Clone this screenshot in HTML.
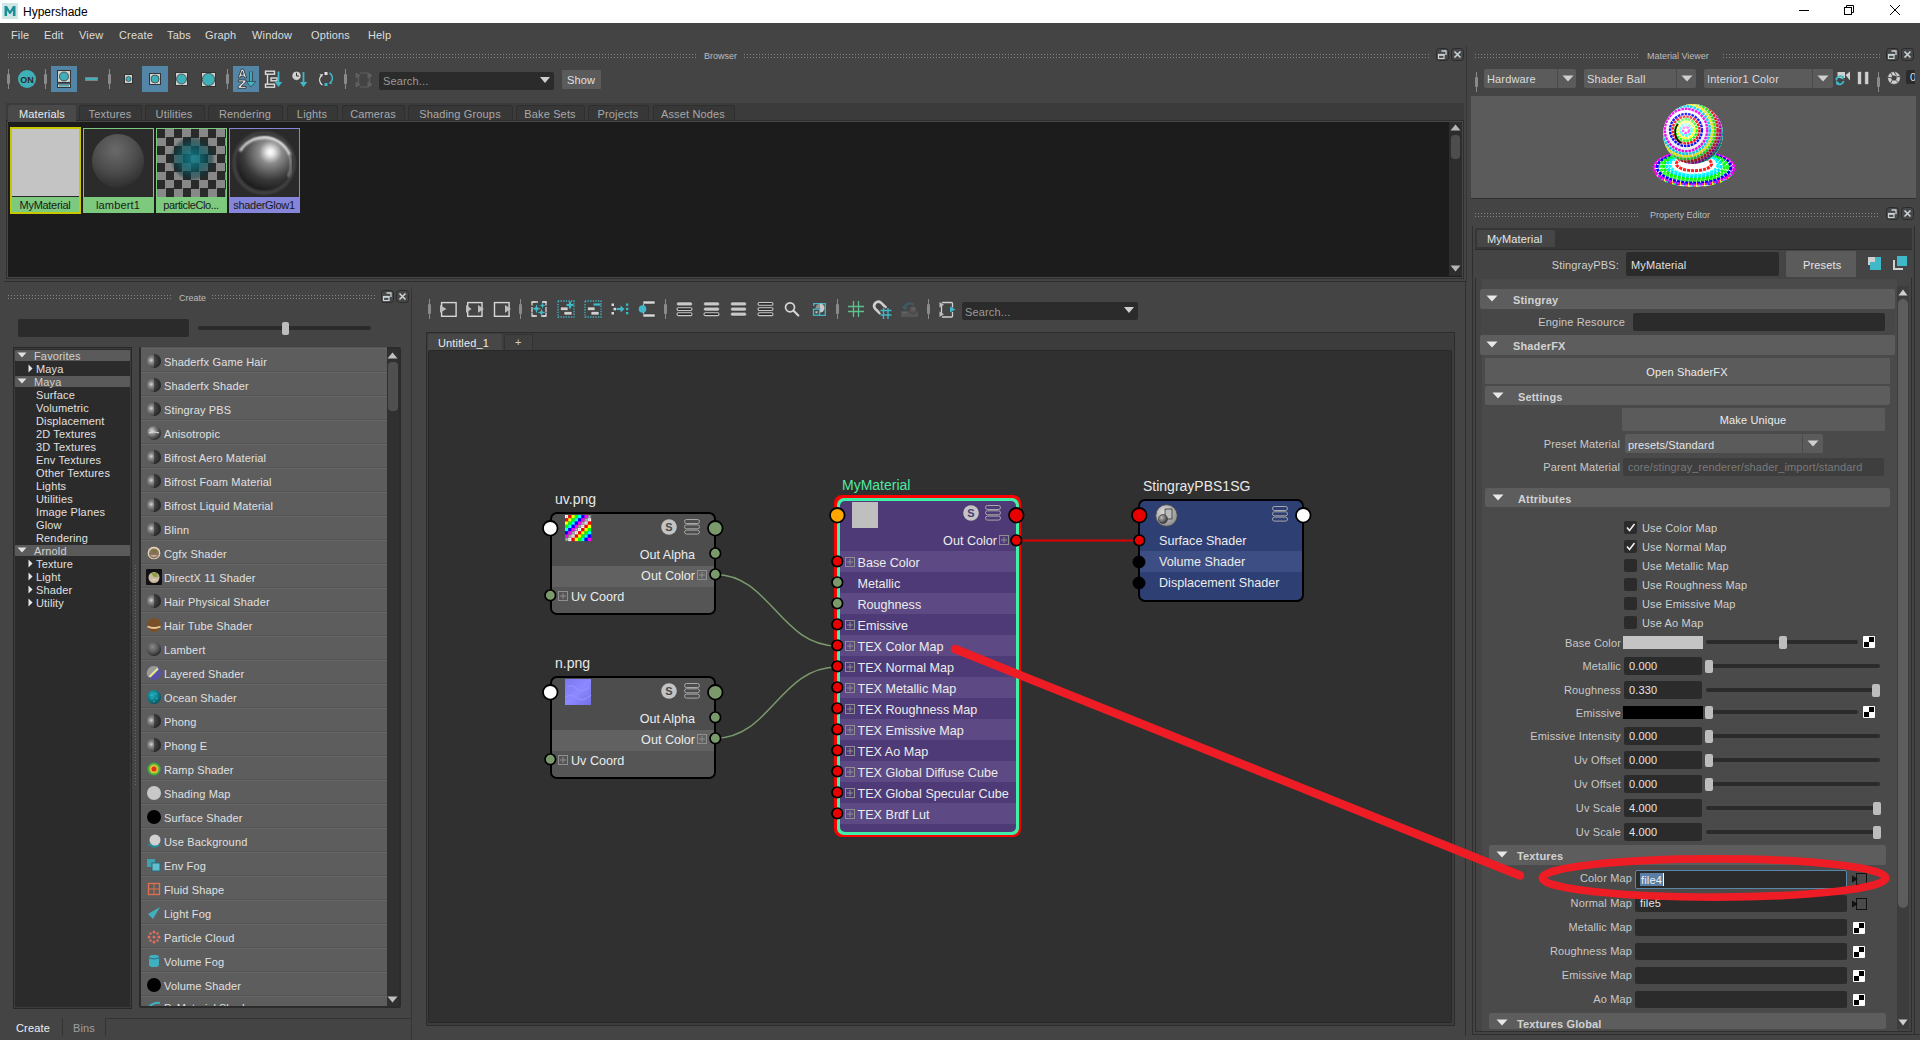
<!DOCTYPE html>
<html><head><meta charset="utf-8"><style>
*{margin:0;padding:0;box-sizing:border-box}
html,body{width:1920px;height:1040px;overflow:hidden;background:#444444;font-family:"Liberation Sans",sans-serif;font-size:11px;color:#c8c8c8;position:relative}
.a{position:absolute}
svg.a{overflow:visible}
.t{position:absolute;white-space:nowrap;line-height:1}
.dots{position:absolute;height:4px;background:repeating-linear-gradient(90deg,#858585 0 1px,transparent 1px 3px) top/100% 1px no-repeat,repeating-linear-gradient(90deg,#858585 0 1px,transparent 1px 3px) bottom/100% 1px no-repeat}
</style></head><body>
<div class="a" style="left:0px;top:0px;width:1920px;height:23px;background:#ffffff;"></div>
<svg class="a" style="left:2px;top:3px;" width="16" height="16" viewBox="0 0 16 16"><rect width="16" height="16" fill="#cfe6e6"/><path d="M2.5 13V3h2.5l3 5 3-5h2.5v10h-2.6V7.5L8.5 11h-1L5.1 7.5V13z" fill="#1a8f95"/></svg>
<div class="t" style="left:23px;top:6px;font-size:12px;color:#000;">Hypershade</div>
<div class="a" style="left:1799px;top:10px;width:10px;height:1px;background:#000;"></div>
<svg class="a" style="left:1844px;top:5px;" width="11" height="11" viewBox="0 0 11 11"><rect x="0.5" y="2.5" width="7" height="7" fill="none" stroke="#000"/><path d="M2.5 2.5V0.5h7v7H7.5" fill="none" stroke="#000"/></svg>
<svg class="a" style="left:1890px;top:5px;" width="10" height="10" viewBox="0 0 10 10"><path d="M0 0L10 10M10 0L0 10" stroke="#000" stroke-width="1"/></svg>
<div class="t" style="left:11px;top:30px;font-size:11px;color:#dddddd;;letter-spacing:0.15px">File</div>
<div class="t" style="left:44px;top:30px;font-size:11px;color:#dddddd;;letter-spacing:0.15px">Edit</div>
<div class="t" style="left:79px;top:30px;font-size:11px;color:#dddddd;;letter-spacing:0.15px">View</div>
<div class="t" style="left:119px;top:30px;font-size:11px;color:#dddddd;;letter-spacing:0.15px">Create</div>
<div class="t" style="left:167px;top:30px;font-size:11px;color:#dddddd;;letter-spacing:0.15px">Tabs</div>
<div class="t" style="left:205px;top:30px;font-size:11px;color:#dddddd;;letter-spacing:0.15px">Graph</div>
<div class="t" style="left:252px;top:30px;font-size:11px;color:#dddddd;;letter-spacing:0.15px">Window</div>
<div class="t" style="left:311px;top:30px;font-size:11px;color:#dddddd;;letter-spacing:0.15px">Options</div>
<div class="t" style="left:368px;top:30px;font-size:11px;color:#dddddd;;letter-spacing:0.15px">Help</div>
<div class="dots" style="left:8px;top:54px;width:689px"></div>
<div class="t" style="left:704px;top:52px;font-size:9px;color:#bdbdbd;">Browser</div>
<div class="dots" style="left:744px;top:54px;width:686px"></div>
<svg class="a" style="left:1436px;top:48px;" width="13" height="13" viewBox="0 0 13 13"><rect x="0.5" y="0.5" width="12" height="12" rx="3" fill="#474747" stroke="#2a2a2a"/><rect x="2.5" y="6.5" width="5.5" height="4" fill="none" stroke="#c9d3d8" stroke-width="1.2"/><rect x="2" y="6" width="6.5" height="1.8" fill="#c9d3d8"/><path d="M5.5 3h4.5v4" fill="none" stroke="#c9d3d8" stroke-width="1.3"/></svg>
<svg class="a" style="left:1451px;top:48px;" width="13" height="13" viewBox="0 0 13 13"><rect x="0.5" y="0.5" width="12" height="12" rx="3" fill="#474747" stroke="#2a2a2a"/><path d="M3.5 3.5l6 6M9.5 3.5l-6 6" stroke="#c9d3d8" stroke-width="1.6"/></svg>
<div class="a" style="left:1466px;top:46px;width:1px;height:236px;background:#363636;"></div>
<div class="a" style="left:8px;top:69px;width:1px;height:20px;background:#8a8a8a;"></div>
<div class="a" style="left:7px;top:74px;width:3px;height:10px;background:#8a8a8a;border-radius:1px"></div>
<svg class="a" style="left:18px;top:70px;" width="18" height="18" viewBox="0 0 18 18"><circle cx="9" cy="9" r="9" fill="#3fb0b8"/><text x="9" y="12.5" font-size="9" text-anchor="middle" fill="#2a2a2a" font-family="Liberation Sans" font-weight="bold">ON</text></svg>
<div class="a" style="left:45px;top:69px;width:1px;height:20px;background:#8a8a8a;"></div>
<div class="a" style="left:44px;top:74px;width:3px;height:10px;background:#8a8a8a;border-radius:1px"></div>
<div class="a" style="left:51px;top:66px;width:26px;height:26px;background:#5285a6;"></div>
<svg class="a" style="left:57px;top:70px;" width="14" height="18" viewBox="0 0 14 18"><rect x="0.5" y="0.5" width="13" height="12" fill="#d0d0d0" stroke="#333"/><circle cx="7" cy="6.5" r="4.5" fill="#3fb0b8" stroke="#333" stroke-width="0.8"/><rect x="0.5" y="14" width="13" height="3.5" fill="#d0d0d0" stroke="#333"/><rect x="2" y="15" width="10" height="1.5" fill="#3fb0b8"/></svg>
<svg class="a" style="left:85px;top:77px;" width="13" height="4" viewBox="0 0 13 4"><rect x="0.5" y="0.5" width="12" height="3" fill="#3fb0b8" stroke="#888" stroke-width="0.8"/></svg>
<div class="a" style="left:109px;top:69px;width:1px;height:20px;background:#8a8a8a;"></div>
<div class="a" style="left:108px;top:74px;width:3px;height:10px;background:#8a8a8a;border-radius:1px"></div>
<svg class="a" style="left:124px;top:74px;" width="9" height="10" viewBox="0 0 9 10"><rect x="0.5" y="0.5" width="8" height="9" fill="#d0d0d0" stroke="#333"/><circle cx="4.5" cy="5" r="2.5" fill="#3fb0b8" stroke="#333" stroke-width="0.6"/></svg>
<div class="a" style="left:142px;top:66px;width:26px;height:26px;background:#5285a6;"></div>
<svg class="a" style="left:149px;top:73px;" width="12" height="12" viewBox="0 0 12 12"><rect x="0.5" y="0.5" width="11" height="11" fill="#d0d0d0" stroke="#333"/><circle cx="6" cy="6" r="4" fill="#3fb0b8" stroke="#333" stroke-width="0.7"/></svg>
<svg class="a" style="left:175px;top:72px;" width="13" height="14" viewBox="0 0 13 14"><rect x="0.5" y="0.5" width="12" height="13" fill="#d0d0d0" stroke="#333"/><circle cx="6.5" cy="7" r="5" fill="#3fb0b8" stroke="#333" stroke-width="0.7"/></svg>
<svg class="a" style="left:201px;top:72px;" width="15" height="15" viewBox="0 0 15 15"><rect x="0.5" y="0.5" width="14" height="14" fill="#d0d0d0" stroke="#333"/><circle cx="7.5" cy="7.5" r="6.2" fill="#3fb0b8" stroke="#333" stroke-width="0.7"/></svg>
<div class="a" style="left:227px;top:69px;width:1px;height:20px;background:#8a8a8a;"></div>
<div class="a" style="left:226px;top:74px;width:3px;height:10px;background:#8a8a8a;border-radius:1px"></div>
<div class="a" style="left:233px;top:66px;width:26px;height:26px;background:#5285a6;"></div>
<svg class="a" style="left:236px;top:68px;" width="22" height="22" viewBox="0 0 22 22"><g stroke="#2a2a2a" stroke-width="0.8" fill="#e8e8e8"><path d="M2.3 9.8L5.3 1.2h2.2l3 8.6H8.4L7.8 8H4.9L4.3 9.8zM5.4 6.3h1.9l-0.95-3z"/><path d="M2.3 12h7.6v1.8L5 18.5h5v1.8H2.2v-1.8l4.9-4.7H2.3z"/></g><path d="M15 3.5v12.5" stroke="#2a2a2a" stroke-width="3.2"/><path d="M15 3.5v12.5" stroke="#3fb8c8" stroke-width="1.8"/><path d="M10.5 13.5l4.5 5.5 4.5-5.5z" fill="#3fb8c8" stroke="#2a2a2a" stroke-width="0.6"/></svg>
<svg class="a" style="left:263px;top:69px;" width="20" height="20" viewBox="0 0 20 20"><g fill="none" stroke="#dcdcdc" stroke-width="1.4"><rect x="2.5" y="2.2" width="9" height="3"/><rect x="2.5" y="15.2" width="9" height="3"/><path d="M4.5 5.5v9.5"/><rect x="8" y="9" width="6" height="2.8"/></g><path d="M15.5 2.5v13" stroke="#3fb8c8" stroke-width="1.8"/><path d="M11.8 13l3.7 5 3.7-5z" fill="#3fb8c8"/></svg>
<svg class="a" style="left:290px;top:69px;" width="20" height="20" viewBox="0 0 20 20"><circle cx="6.5" cy="6.8" r="4.6" fill="#d0d0d0" stroke="#2a2a2a" stroke-width="0.6"/><path d="M6.5 3.8v3.2h2.5" stroke="#333" stroke-width="1" fill="none"/><path d="M13.5 3v12.5" stroke="#3fb8c8" stroke-width="1.8"/><path d="M9.8 13l3.7 5 3.7-5z" fill="#3fb8c8"/></svg>
<svg class="a" style="left:317px;top:70px;" width="18" height="18" viewBox="0 0 18 18"><rect x="7.5" y="2" width="3" height="3" fill="#e0e0e0"/><rect x="7.5" y="13" width="3" height="3" fill="#3fb8c8"/><path d="M5.5 15a6 6 0 0 1-1.5-9" stroke="#e0e0e0" stroke-width="1.2" fill="none"/><path d="M2.5 4.5l3.5-0.5-1 3z" fill="#e0e0e0"/><path d="M12.5 3a6 6 0 0 1 1.5 9" stroke="#3fb8c8" stroke-width="1.5" fill="none"/><path d="M15.5 13.5l-3.5 0.5 1-3z" fill="#3fb8c8"/></svg>
<div class="a" style="left:345px;top:69px;width:1px;height:20px;background:#8a8a8a;"></div>
<div class="a" style="left:344px;top:74px;width:3px;height:10px;background:#8a8a8a;border-radius:1px"></div>
<svg class="a" style="left:356px;top:72px;" width="16" height="16" viewBox="0 0 16 16"><g fill="#5f5f5f" stroke="#5f5f5f"><path d="M0 1l4 2.5L0 6z"/><path d="M12 1l4 2.5L12 6z"/><path d="M0 10l4 2.5L0 15z"/><path d="M12 10l4 2.5L12 15z"/><path d="M4 1h8M4 15h8M2.5 5v6M13.5 5v6" fill="none" stroke-width="1.2"/></g></svg>
<div class="a" style="left:379px;top:72px;width:175px;height:18px;background:#2b2b2b;border-radius:2px"></div>
<div class="t" style="left:383px;top:76px;font-size:11px;color:#9a9a9a;;letter-spacing:0.15px">Search...</div>
<svg class="a" style="left:540px;top:77px;" width="10" height="6" viewBox="0 0 10 6"><path d="M0 0h10L5 6z" fill="#cfcfcf"/></svg>
<div class="a" style="left:562px;top:70px;width:39px;height:19px;background:#5b5b5b;border-radius:1px"></div>
<div class="t" style="left:567px;top:75px;font-size:11px;color:#e0e0e0;;letter-spacing:0.15px">Show</div>
<div class="a" style="left:6px;top:103px;width:1458px;height:18px;background:#3b3b3b;"></div>
<div class="a" style="left:9px;top:105px;width:67px;height:16px;background:#494949;border-radius:3px 3px 0 0"></div>
<div class="t" style="left:-258px;width:600px;text-align:center;top:109px;font-size:11px;color:#ececec;;letter-spacing:0.15px">Materials</div>
<div class="a" style="left:79px;top:105px;width:63px;height:16px;background:#373737;border-radius:3px 3px 0 0;border:1px solid #2f2f2f;border-bottom:none"></div>
<div class="t" style="left:-190px;width:600px;text-align:center;top:109px;font-size:11px;color:#a8a8a8;;letter-spacing:0.15px">Textures</div>
<div class="a" style="left:145px;top:105px;width:60px;height:16px;background:#373737;border-radius:3px 3px 0 0;border:1px solid #2f2f2f;border-bottom:none"></div>
<div class="t" style="left:-126px;width:600px;text-align:center;top:109px;font-size:11px;color:#a8a8a8;;letter-spacing:0.15px">Utilities</div>
<div class="a" style="left:208px;top:105px;width:75px;height:16px;background:#373737;border-radius:3px 3px 0 0;border:1px solid #2f2f2f;border-bottom:none"></div>
<div class="t" style="left:-55px;width:600px;text-align:center;top:109px;font-size:11px;color:#a8a8a8;;letter-spacing:0.15px">Rendering</div>
<div class="a" style="left:287px;top:105px;width:51px;height:16px;background:#373737;border-radius:3px 3px 0 0;border:1px solid #2f2f2f;border-bottom:none"></div>
<div class="t" style="left:12px;width:600px;text-align:center;top:109px;font-size:11px;color:#a8a8a8;;letter-spacing:0.15px">Lights</div>
<div class="a" style="left:342px;top:105px;width:63px;height:16px;background:#373737;border-radius:3px 3px 0 0;border:1px solid #2f2f2f;border-bottom:none"></div>
<div class="t" style="left:73px;width:600px;text-align:center;top:109px;font-size:11px;color:#a8a8a8;;letter-spacing:0.15px">Cameras</div>
<div class="a" style="left:408px;top:105px;width:105px;height:16px;background:#373737;border-radius:3px 3px 0 0;border:1px solid #2f2f2f;border-bottom:none"></div>
<div class="t" style="left:160px;width:600px;text-align:center;top:109px;font-size:11px;color:#a8a8a8;;letter-spacing:0.15px">Shading Groups</div>
<div class="a" style="left:516px;top:105px;width:69px;height:16px;background:#373737;border-radius:3px 3px 0 0;border:1px solid #2f2f2f;border-bottom:none"></div>
<div class="t" style="left:250px;width:600px;text-align:center;top:109px;font-size:11px;color:#a8a8a8;;letter-spacing:0.15px">Bake Sets</div>
<div class="a" style="left:588px;top:105px;width:61px;height:16px;background:#373737;border-radius:3px 3px 0 0;border:1px solid #2f2f2f;border-bottom:none"></div>
<div class="t" style="left:318px;width:600px;text-align:center;top:109px;font-size:11px;color:#a8a8a8;;letter-spacing:0.15px">Projects</div>
<div class="a" style="left:653px;top:105px;width:82px;height:16px;background:#373737;border-radius:3px 3px 0 0;border:1px solid #2f2f2f;border-bottom:none"></div>
<div class="t" style="left:393px;width:600px;text-align:center;top:109px;font-size:11px;color:#a8a8a8;;letter-spacing:0.15px">Asset Nodes</div>
<div class="a" style="left:6px;top:120px;width:1458px;height:159px;background:#2e2e2e;"></div>
<div class="a" style="left:7px;top:121px;width:1456px;height:157px;background:#474747;"></div>
<div class="a" style="left:8px;top:122px;width:1454px;height:155px;background:#1c1c1c;"></div>
<div class="a" style="left:8px;top:105px;width:68px;height:17px;background:#494949;border-radius:3px 3px 0 0"></div>
<div class="t" style="left:-258px;width:600px;text-align:center;top:109px;font-size:11px;color:#ececec;;letter-spacing:0.15px">Materials</div>
<div class="a" style="left:1449px;top:122px;width:13px;height:154px;background:#2d2d2d;"></div>
<svg class="a" style="left:1450px;top:124px;" width="11" height="8" viewBox="0 0 11 8"><path d="M0.5 6.5L5.5 0.5 10.5 6.5z" fill="#b5b5b5"/></svg>
<div class="a" style="left:1451px;top:135px;width:9px;height:24px;background:#4d4d4d;border-radius:4px"></div>
<svg class="a" style="left:1450px;top:265px;" width="11" height="8" viewBox="0 0 11 8"><path d="M0.5 0.5L5.5 6.5 10.5 0.5z" fill="#b5b5b5"/></svg>
<div class="a" style="left:4px;top:281px;width:1461px;height:1px;background:#2e2e2e;"></div>
<div class="a" style="left:10px;top:127px;width:71px;height:87px;background:#c8c800;"></div>
<div class="a" style="left:12px;top:129px;width:67px;height:68px;background:#c4c4c4;"></div>
<div class="a" style="left:12px;top:197px;width:67px;height:15px;background:#7dc97d;"></div>
<div class="a" style="left:12px;top:196px;width:67px;height:1px;background:#2a2a2a;"></div>
<div class="t" style="left:-255px;width:600px;text-align:center;top:200px;font-size:11px;color:#1a1a1a;letter-spacing:-0.3px">MyMaterial</div>
<div class="a" style="left:83px;top:128px;width:71px;height:85px;background:#7dc97d;"></div>
<div class="a" style="left:84px;top:129px;width:69px;height:68px;background:#2b2b2b;"></div>
<div class="a" style="left:92px;top:134px;width:52px;height:54px;border-radius:50%;background:radial-gradient(circle at 45% 30%,#6a6a6a 0%,#4d4d4d 45%,#2e2e2e 80%,#1e1e1e 100%)"></div>
<div class="t" style="left:-182px;width:600px;text-align:center;top:200px;font-size:11px;color:#1a1a1a;;letter-spacing:0.15px">lambert1</div>
<div class="a" style="left:156px;top:128px;width:71px;height:85px;background:#7dc97d;"></div>
<div class="a" style="left:157px;top:129px;width:69px;height:68px;background:conic-gradient(#888888 0 25%,#2a2a2a 0 50%,#888888 0 75%,#2a2a2a 0) 0 0/17px 17px"></div>
<div class="a" style="left:170px;top:136px;width:45px;height:45px;border-radius:50%;background:radial-gradient(circle,rgba(15,130,145,0.85) 0%,rgba(10,95,105,0.75) 35%,rgba(5,50,55,0.45) 60%,rgba(0,0,0,0) 72%)"></div>
<div class="t" style="left:-109px;width:600px;text-align:center;top:200px;font-size:11px;color:#1a1a1a;letter-spacing:-0.4px">particleClo...</div>
<div class="a" style="left:229px;top:128px;width:71px;height:85px;background:#8585d9;"></div>
<div class="a" style="left:230px;top:129px;width:69px;height:68px;background:#2a2a2a;"></div>
<svg class="a" style="left:230px;top:129px;" width="69" height="68" viewBox="0 0 69 68"><defs><radialGradient id="sgl" cx="0.62" cy="0.3" r="0.85"><stop offset="0" stop-color="#ffffff"/><stop offset="0.08" stop-color="#e8e8e8"/><stop offset="0.25" stop-color="#8a8a8a"/><stop offset="0.6" stop-color="#3a3a3a"/><stop offset="1" stop-color="#0a0a0a"/></radialGradient><filter id="bl"><feGaussianBlur stdDeviation="1"/></filter></defs><circle cx="34" cy="34" r="27" fill="url(#sgl)"/><path d="M10 22A28 28 0 0 1 60 26" stroke="#ffffff" stroke-width="2.5" fill="none" filter="url(#bl)" opacity="0.9"/><path d="M60 26A28 28 0 0 1 58 48" stroke="#ffffff" stroke-width="1.5" fill="none" filter="url(#bl)" opacity="0.6"/><circle cx="34" cy="34" r="30" fill="none" stroke="#ffffff" stroke-width="3" opacity="0.12" filter="url(#bl)"/></svg>
<div class="t" style="left:-36px;width:600px;text-align:center;top:200px;font-size:11px;color:#1a1a1a;letter-spacing:-0.3px">shaderGlow1</div>
<div class="dots" style="left:1475px;top:54px;width:163px"></div>
<div class="t" style="left:1647px;top:52px;font-size:9px;color:#bdbdbd;">Material Viewer</div>
<div class="dots" style="left:1723px;top:54px;width:157px"></div>
<svg class="a" style="left:1886px;top:48px;" width="13" height="13" viewBox="0 0 13 13"><rect x="0.5" y="0.5" width="12" height="12" rx="3" fill="#474747" stroke="#2a2a2a"/><rect x="2.5" y="6.5" width="5.5" height="4" fill="none" stroke="#c9d3d8" stroke-width="1.2"/><rect x="2" y="6" width="6.5" height="1.8" fill="#c9d3d8"/><path d="M5.5 3h4.5v4" fill="none" stroke="#c9d3d8" stroke-width="1.3"/></svg>
<svg class="a" style="left:1901px;top:48px;" width="13" height="13" viewBox="0 0 13 13"><rect x="0.5" y="0.5" width="12" height="12" rx="3" fill="#474747" stroke="#2a2a2a"/><path d="M3.5 3.5l6 6M9.5 3.5l-6 6" stroke="#c9d3d8" stroke-width="1.6"/></svg>
<div class="a" style="left:1476px;top:72px;width:1px;height:20px;background:#8a8a8a;"></div>
<div class="a" style="left:1475px;top:77px;width:3px;height:10px;background:#8a8a8a;border-radius:1px"></div>
<div class="a" style="left:1484px;top:69px;width:92px;height:19px;background:#5b5b5b;border-radius:2px"></div>
<div class="a" style="left:1557px;top:69px;width:1px;height:19px;background:#4a4a4a;"></div>
<div class="t" style="left:1487px;top:74px;font-size:11px;color:#dcdcdc;;letter-spacing:0.15px">Hardware</div>
<svg class="a" style="left:1562px;top:75px;" width="12" height="7" viewBox="0 0 12 7"><path d="M0.5 0.5h11L6 6.5z" fill="#cfcfcf"/></svg>
<div class="a" style="left:1584px;top:69px;width:112px;height:19px;background:#5b5b5b;border-radius:2px"></div>
<div class="a" style="left:1676px;top:69px;width:1px;height:19px;background:#4a4a4a;"></div>
<div class="t" style="left:1587px;top:74px;font-size:11px;color:#dcdcdc;;letter-spacing:0.15px">Shader Ball</div>
<svg class="a" style="left:1681px;top:75px;" width="12" height="7" viewBox="0 0 12 7"><path d="M0.5 0.5h11L6 6.5z" fill="#cfcfcf"/></svg>
<div class="a" style="left:1704px;top:69px;width:129px;height:19px;background:#5b5b5b;border-radius:2px"></div>
<div class="a" style="left:1812px;top:69px;width:1px;height:19px;background:#4a4a4a;"></div>
<div class="t" style="left:1707px;top:74px;font-size:11px;color:#dcdcdc;;letter-spacing:0.15px">Interior1 Color</div>
<svg class="a" style="left:1817px;top:75px;" width="12" height="7" viewBox="0 0 12 7"><path d="M0.5 0.5h11L6 6.5z" fill="#cfcfcf"/></svg>
<svg class="a" style="left:1835px;top:71px;" width="17" height="14" viewBox="0 0 17 14"><rect x="2.5" y="1" width="7.5" height="6" fill="#d0d0d0"/><path d="M10.5 4L15 0.5v9z" fill="#d0d0d0"/><path d="M1.5 9.5a4 3.5 0 0 1 7-3" stroke="#3fb8c8" stroke-width="1.8" fill="none"/><path d="M9 5l-0.5 3.5-3-1z" fill="#3fb8c8"/><path d="M8.5 10a4 3.5 0 0 1-7 2" stroke="#3fb8c8" stroke-width="1.8" fill="none"/><path d="M1 13.5l0.3-3.5 3 1.2z" fill="#3fb8c8"/></svg>
<svg class="a" style="left:1857px;top:71px;" width="12" height="14" viewBox="0 0 12 14"><rect x="0.5" y="0.5" width="4" height="13" rx="0.8" fill="#d0d0d0" stroke="#3a3a3a" stroke-width="0.6"/><rect x="7.7" y="0.5" width="4" height="13" rx="0.8" fill="#d0d0d0" stroke="#3a3a3a" stroke-width="0.6"/></svg>
<div class="a" style="left:1878px;top:72px;width:1px;height:20px;background:#8a8a8a;"></div>
<div class="a" style="left:1877px;top:77px;width:3px;height:10px;background:#8a8a8a;border-radius:1px"></div>
<svg class="a" style="left:1887px;top:71px;" width="14" height="14" viewBox="0 0 14 14"><circle cx="7" cy="7" r="6.4" fill="#cfcfcf" stroke="#333" stroke-width="0.6"/><circle cx="7" cy="7" r="2.6" fill="#444"/><path d="M7 0.6L9.4 4.6M13.2 5.4L8.8 6M11.3 11.7L8.3 8.8M3.5 12.3L5.5 8.5M0.7 6.2L5 7M3.6 1.6L5.6 5" stroke="#444" stroke-width="0.9"/></svg>
<div class="a" style="left:1906px;top:70px;width:9px;height:14px;background:#2b2b2b;border-radius:2px 0 0 2px;overflow:hidden"><div class="t" style="left:4px;top:2px;font-size:11px;color:#ddd">0</div></div>
<div class="a" style="left:1471px;top:96px;width:445px;height:102px;background:#5b5b5b;"></div>
<div class="a" style="left:1471px;top:198px;width:445px;height:1px;background:#2e2e2e;"></div>
<svg class="a" style="left:1654px;top:104px;" width="80" height="84" viewBox="0 0 80 84"><defs>
<clipPath id="sc"><circle cx="39" cy="30" r="30"/></clipPath>
<radialGradient id="sh" cx="0.38" cy="0.35" r="0.7"><stop offset="0" stop-color="#fff" stop-opacity="0.75"/><stop offset="0.3" stop-color="#fff" stop-opacity="0.1"/><stop offset="0.75" stop-color="#000" stop-opacity="0.15"/><stop offset="1" stop-color="#000" stop-opacity="0.7"/></radialGradient>
<pattern id="bs" width="8" height="6" patternUnits="userSpaceOnUse"><rect width="8" height="6" fill="#fff"/><rect x="0" y="0" width="2" height="6" fill="#ff2020"/><rect x="2" y="0" width="2" height="6" fill="#ffff00"/><rect x="4" y="0" width="2" height="6" fill="#00ff60"/><rect x="6" y="0" width="2" height="6" fill="#2040ff"/><rect x="0" y="3" width="8" height="1.5" fill="#ffffff" opacity="0.6"/></pattern>
</defs>
<ellipse cx="40" cy="66" rx="40" ry="17" fill="url(#bs)"/>
<ellipse cx="40" cy="63" rx="40" ry="16" fill="#ffffff"/>
<ellipse cx="40" cy="64.0" rx="40.0" ry="16.0" fill="none" stroke="#ff00ff" stroke-width="3" stroke-dasharray="3 1"/><ellipse cx="40" cy="63.4" rx="36.8" ry="14.7" fill="none" stroke="#0000ff" stroke-width="3" stroke-dasharray="3 1"/><ellipse cx="40" cy="62.8" rx="33.6" ry="13.4" fill="none" stroke="#20ff20" stroke-width="3" stroke-dasharray="3 1"/><ellipse cx="40" cy="62.2" rx="30.4" ry="12.1" fill="none" stroke="#00ff00" stroke-width="3" stroke-dasharray="3 1"/><ellipse cx="40" cy="61.6" rx="27.2" ry="10.8" fill="none" stroke="#00e0ff" stroke-width="3" stroke-dasharray="3 1"/><ellipse cx="40" cy="61.0" rx="24.0" ry="9.5" fill="none" stroke="#00ffff" stroke-width="3" stroke-dasharray="3 1"/><ellipse cx="40" cy="60.4" rx="20.8" ry="8.2" fill="none" stroke="#ffffff" stroke-width="3" stroke-dasharray="3 1"/><ellipse cx="40" cy="59.8" rx="17.6" ry="6.9" fill="none" stroke="#ff2020" stroke-width="3" stroke-dasharray="3 1"/>
<g clip-path="url(#sc)"><rect x="0" y="0" width="80" height="62" fill="#ffffff"/><circle cx="32" cy="26" r="3.0" fill="none" stroke="#ff00ff" stroke-width="2.4" stroke-dasharray="2.6 0.9"/><circle cx="32" cy="26" r="5.6" fill="none" stroke="#00ffff" stroke-width="2.4" stroke-dasharray="2.6 0.9"/><circle cx="32" cy="26" r="8.2" fill="none" stroke="#ffff00" stroke-width="2.4" stroke-dasharray="2.6 0.9"/><circle cx="32" cy="26" r="10.8" fill="none" stroke="#00ff00" stroke-width="2.4" stroke-dasharray="2.6 0.9"/><circle cx="32" cy="26" r="13.4" fill="none" stroke="#ff0000" stroke-width="2.4" stroke-dasharray="2.6 0.9"/><circle cx="32" cy="26" r="16.0" fill="none" stroke="#0000ff" stroke-width="2.4" stroke-dasharray="2.6 0.9"/><circle cx="32" cy="26" r="18.6" fill="none" stroke="#ffffff" stroke-width="2.4" stroke-dasharray="2.6 0.9"/><circle cx="32" cy="26" r="21.2" fill="none" stroke="#ff00ff" stroke-width="2.4" stroke-dasharray="2.6 0.9"/><circle cx="32" cy="26" r="23.8" fill="none" stroke="#00e0ff" stroke-width="2.4" stroke-dasharray="2.6 0.9"/><circle cx="32" cy="26" r="26.4" fill="none" stroke="#ffff00" stroke-width="2.4" stroke-dasharray="2.6 0.9"/><circle cx="32" cy="26" r="29.0" fill="none" stroke="#20ff20" stroke-width="2.4" stroke-dasharray="2.6 0.9"/><circle cx="32" cy="26" r="31.6" fill="none" stroke="#ff2020" stroke-width="2.4" stroke-dasharray="2.6 0.9"/><circle cx="32" cy="26" r="34.2" fill="none" stroke="#ff00ff" stroke-width="2.4" stroke-dasharray="2.6 0.9"/><circle cx="32" cy="26" r="36.8" fill="none" stroke="#00ffff" stroke-width="2.4" stroke-dasharray="2.6 0.9"/><circle cx="39" cy="30" r="30" fill="url(#sh)"/></g>
<path d="M24 20a13 13 0 0 0 3 19" stroke="#111" stroke-width="1.8" fill="none"/></svg>
<div class="dots" style="left:1475px;top:213px;width:163px"></div>
<div class="t" style="left:1650px;top:211px;font-size:9px;color:#bdbdbd;">Property Editor</div>
<div class="dots" style="left:1721px;top:213px;width:159px"></div>
<svg class="a" style="left:1886px;top:207px;" width="13" height="13" viewBox="0 0 13 13"><rect x="0.5" y="0.5" width="12" height="12" rx="3" fill="#474747" stroke="#2a2a2a"/><rect x="2.5" y="6.5" width="5.5" height="4" fill="none" stroke="#c9d3d8" stroke-width="1.2"/><rect x="2" y="6" width="6.5" height="1.8" fill="#c9d3d8"/><path d="M5.5 3h4.5v4" fill="none" stroke="#c9d3d8" stroke-width="1.3"/></svg>
<svg class="a" style="left:1901px;top:207px;" width="13" height="13" viewBox="0 0 13 13"><rect x="0.5" y="0.5" width="12" height="12" rx="3" fill="#474747" stroke="#2a2a2a"/><path d="M3.5 3.5l6 6M9.5 3.5l-6 6" stroke="#c9d3d8" stroke-width="1.6"/></svg>
<div class="a" style="left:1472px;top:226px;width:1px;height:809px;background:#2f2f2f;"></div>
<div class="a" style="left:1472px;top:1034px;width:448px;height:1px;background:#2f2f2f;"></div>
<div class="a" style="left:1475px;top:228px;width:437px;height:22px;background:#363636;"></div>
<div class="a" style="left:1477px;top:230px;width:78px;height:17px;background:#464646;border-radius:2px 2px 0 0"></div>
<div class="t" style="left:1487px;top:234px;font-size:11px;color:#e6e6e6;;letter-spacing:0.15px">MyMaterial</div>
<div class="a" style="left:1475px;top:249px;width:437px;height:1px;background:#2b2b2b;"></div>
<div class="t" style="right:301px;top:260px;font-size:11px;color:#cfcfcf;;letter-spacing:0.15px">StingrayPBS:</div>
<div class="a" style="left:1626px;top:252px;width:153px;height:24px;background:#2b2b2b;border-radius:2px"></div>
<div class="t" style="left:1631px;top:260px;font-size:11px;color:#e0e0e0;;letter-spacing:0.15px">MyMaterial</div>
<div class="a" style="left:1786px;top:251px;width:70px;height:26px;background:#5b5b5b;border-radius:1px"></div>
<div class="t" style="left:1803px;top:260px;font-size:11px;color:#e6e6e6;;letter-spacing:0.15px">Presets</div>
<svg class="a" style="left:1868px;top:257px;" width="13" height="13" viewBox="0 0 13 13"><rect x="0" y="0" width="7" height="5" fill="#d0d0d0"/><rect x="7" y="0" width="6" height="13" fill="#3fb8c8"/><rect x="2" y="5" width="5" height="8" fill="#3fb8c8"/><rect x="0" y="5" width="2" height="3" fill="#d0d0d0"/></svg>
<svg class="a" style="left:1893px;top:256px;" width="14" height="14" viewBox="0 0 14 14"><rect x="4" y="0" width="10" height="10" fill="#3fb8c8"/><path d="M1 4v9h9" stroke="#d0d0d0" stroke-width="2" fill="none"/></svg>
<div class="a" style="left:1475px;top:278px;width:1px;height:754px;background:#2e2e2e;"></div>
<div class="a" style="left:1475px;top:1031px;width:437px;height:1px;background:#2e2e2e;"></div>
<div class="a" style="left:1911px;top:278px;width:1px;height:754px;background:#2e2e2e;"></div>
<div class="a" style="left:1914px;top:226px;width:1px;height:809px;background:#2e2e2e;"></div>
<div class="a" style="left:1482px;top:279px;width:415px;height:752px;background:#4a4a4a;"></div>
<div class="a" style="left:1897px;top:286px;width:12px;height:743px;background:#3d3d3d;"></div>
<svg class="a" style="left:1898px;top:289px;" width="10" height="7" viewBox="0 0 10 7"><path d="M0.5 6.5L5 0.5 9.5 6.5z" fill="#cfcfcf"/></svg>
<div class="a" style="left:1898px;top:299px;width:10px;height:609px;background:#5d5d5d;border-radius:5px"></div>
<svg class="a" style="left:1898px;top:1019px;" width="10" height="7" viewBox="0 0 10 7"><path d="M0.5 0.5L5 6.5 9.5 0.5z" fill="#cfcfcf"/></svg>
<div class="a" style="left:1480px;top:289px;width:415px;height:20px;background:#5d5d5d;border-radius:2px"></div>
<svg class="a" style="left:1486px;top:295px;" width="12" height="7" viewBox="0 0 12 7"><path d="M0.5 0.5h11L6 6.5z" fill="#e8e8e8"/></svg>
<div class="t" style="left:1513px;top:294.5px;font-size:11px;color:#d2d2d2;font-weight:bold;letter-spacing:0.15px">Stingray</div>
<div class="a" style="left:1481px;top:309px;width:414px;height:26px;background:#474747;"></div>
<div class="t" style="right:295px;top:317px;font-size:11px;color:#c8c8c8;;letter-spacing:0.15px">Engine Resource</div>
<div class="a" style="left:1633px;top:313px;width:252px;height:18px;background:#2b2b2b;border-radius:2px"></div>
<div class="a" style="left:1480px;top:335px;width:415px;height:20px;background:#5d5d5d;border-radius:2px"></div>
<svg class="a" style="left:1486px;top:341px;" width="12" height="7" viewBox="0 0 12 7"><path d="M0.5 0.5h11L6 6.5z" fill="#e8e8e8"/></svg>
<div class="t" style="left:1513px;top:340.5px;font-size:11px;color:#d2d2d2;font-weight:bold;letter-spacing:0.15px">ShaderFX</div>
<div class="a" style="left:1485px;top:358px;width:405px;height:26px;background:#5b5b5b;border-radius:1px"></div>
<div class="t" style="left:1387px;width:600px;text-align:center;top:367px;font-size:11px;color:#ececec;;letter-spacing:0.15px">Open ShaderFX</div>
<div class="a" style="left:1485px;top:386px;width:405px;height:19px;background:#5d5d5d;border-radius:2px"></div>
<svg class="a" style="left:1492px;top:392px;" width="12" height="7" viewBox="0 0 12 7"><path d="M0.5 0.5h11L6 6.5z" fill="#e8e8e8"/></svg>
<div class="t" style="left:1518px;top:391.5px;font-size:11px;color:#d2d2d2;font-weight:bold;letter-spacing:0.15px">Settings</div>
<div class="a" style="left:1622px;top:408px;width:263px;height:23px;background:#5b5b5b;border-radius:1px"></div>
<div class="t" style="left:1453px;width:600px;text-align:center;top:415px;font-size:11px;color:#ececec;;letter-spacing:0.15px">Make Unique</div>
<div class="t" style="right:300px;top:439px;font-size:11px;color:#c8c8c8;;letter-spacing:0.15px">Preset Material</div>
<div class="a" style="left:1625px;top:434px;width:198px;height:19px;background:#5b5b5b;border-radius:2px"></div>
<div class="a" style="left:1802px;top:434px;width:1px;height:19px;background:#4c4c4c;"></div>
<div class="t" style="left:1628px;top:440px;font-size:11px;color:#e6e6e6;;letter-spacing:0.15px">presets/Standard</div>
<svg class="a" style="left:1807px;top:440px;" width="12" height="7" viewBox="0 0 12 7"><path d="M0.5 0.5h11L6 6.5z" fill="#cfcfcf"/></svg>
<div class="t" style="right:300px;top:462px;font-size:11px;color:#c8c8c8;;letter-spacing:0.15px">Parent Material</div>
<div class="a" style="left:1623px;top:458px;width:261px;height:18px;background:#3e3e3e;border-radius:2px"></div>
<div class="t" style="left:1628px;top:462px;font-size:11px;color:#7a7a7a;letter-spacing:0.1px">core/stingray_renderer/shader_import/standard</div>
<div class="a" style="left:1485px;top:488px;width:405px;height:19px;background:#5d5d5d;border-radius:2px"></div>
<svg class="a" style="left:1492px;top:494px;" width="12" height="7" viewBox="0 0 12 7"><path d="M0.5 0.5h11L6 6.5z" fill="#e8e8e8"/></svg>
<div class="t" style="left:1518px;top:493.5px;font-size:11px;color:#d2d2d2;font-weight:bold;letter-spacing:0.15px">Attributes</div>
<div class="a" style="left:1624px;top:521px;width:13px;height:13px;background:#2b2b2b;border-radius:2px"></div>
<svg class="a" style="left:1625px;top:522px;" width="11" height="11" viewBox="0 0 11 11"><path d="M2 5.5l2.5 3L9.5 2" stroke="#f0f0f0" stroke-width="1.6" fill="none"/></svg>
<div class="t" style="left:1642px;top:523px;font-size:11px;color:#d0d0d0;;letter-spacing:0.15px">Use Color Map</div>
<div class="a" style="left:1624px;top:540px;width:13px;height:13px;background:#2b2b2b;border-radius:2px"></div>
<svg class="a" style="left:1625px;top:541px;" width="11" height="11" viewBox="0 0 11 11"><path d="M2 5.5l2.5 3L9.5 2" stroke="#f0f0f0" stroke-width="1.6" fill="none"/></svg>
<div class="t" style="left:1642px;top:542px;font-size:11px;color:#d0d0d0;;letter-spacing:0.15px">Use Normal Map</div>
<div class="a" style="left:1624px;top:559px;width:13px;height:13px;background:#2b2b2b;border-radius:2px"></div>
<div class="t" style="left:1642px;top:561px;font-size:11px;color:#d0d0d0;;letter-spacing:0.15px">Use Metallic Map</div>
<div class="a" style="left:1624px;top:578px;width:13px;height:13px;background:#2b2b2b;border-radius:2px"></div>
<div class="t" style="left:1642px;top:580px;font-size:11px;color:#d0d0d0;;letter-spacing:0.15px">Use Roughness Map</div>
<div class="a" style="left:1624px;top:597px;width:13px;height:13px;background:#2b2b2b;border-radius:2px"></div>
<div class="t" style="left:1642px;top:599px;font-size:11px;color:#d0d0d0;;letter-spacing:0.15px">Use Emissive Map</div>
<div class="a" style="left:1624px;top:616px;width:13px;height:13px;background:#2b2b2b;border-radius:2px"></div>
<div class="t" style="left:1642px;top:618px;font-size:11px;color:#d0d0d0;;letter-spacing:0.15px">Use Ao Map</div>
<div class="t" style="right:299px;top:638px;font-size:11px;color:#c8c8c8;;letter-spacing:0.15px">Base Color</div>
<div class="a" style="left:1623px;top:636px;width:80px;height:13px;background:#c4c4c4;"></div>
<div class="a" style="left:1706px;top:640px;width:152px;height:4px;background:#2b2b2b;border-radius:2px"></div>
<div class="a" style="left:1779px;top:636px;width:8px;height:13px;background:#bdbdbd;border-radius:2px"></div>
<svg class="a" style="left:1863px;top:636px;" width="12" height="12" viewBox="0 0 12 12"><rect x="0" y="0" width="12" height="12" rx="1" fill="#fff"/><rect x="6" y="1" width="5" height="5" fill="#000"/><rect x="1" y="6" width="5" height="5" fill="#000"/></svg>
<div class="t" style="right:299px;top:661px;font-size:11px;color:#c8c8c8;;letter-spacing:0.15px">Metallic</div>
<div class="a" style="left:1624px;top:657px;width:78px;height:18px;background:#2b2b2b;border-radius:2px"></div>
<div class="t" style="left:1629px;top:661px;font-size:11px;color:#e6e6e6;;letter-spacing:0.15px">0.000</div>
<div class="a" style="left:1706px;top:664px;width:174px;height:4px;background:#2b2b2b;border-radius:2px"></div>
<div class="a" style="left:1705px;top:660px;width:8px;height:13px;background:#bdbdbd;border-radius:2px"></div>
<div class="t" style="right:299px;top:685px;font-size:11px;color:#c8c8c8;;letter-spacing:0.15px">Roughness</div>
<div class="a" style="left:1624px;top:681px;width:78px;height:18px;background:#2b2b2b;border-radius:2px"></div>
<div class="t" style="left:1629px;top:685px;font-size:11px;color:#e6e6e6;;letter-spacing:0.15px">0.330</div>
<div class="a" style="left:1706px;top:688px;width:174px;height:4px;background:#2b2b2b;border-radius:2px"></div>
<div class="a" style="left:1872px;top:684px;width:8px;height:13px;background:#bdbdbd;border-radius:2px"></div>
<div class="t" style="right:299px;top:708px;font-size:11px;color:#c8c8c8;;letter-spacing:0.15px">Emissive</div>
<div class="a" style="left:1623px;top:706px;width:80px;height:13px;background:#000000;"></div>
<div class="a" style="left:1706px;top:710px;width:152px;height:4px;background:#2b2b2b;border-radius:2px"></div>
<div class="a" style="left:1705px;top:706px;width:8px;height:13px;background:#bdbdbd;border-radius:2px"></div>
<svg class="a" style="left:1863px;top:706px;" width="12" height="12" viewBox="0 0 12 12"><rect x="0" y="0" width="12" height="12" rx="1" fill="#fff"/><rect x="6" y="1" width="5" height="5" fill="#000"/><rect x="1" y="6" width="5" height="5" fill="#000"/></svg>
<div class="t" style="right:299px;top:731px;font-size:11px;color:#c8c8c8;;letter-spacing:0.15px">Emissive Intensity</div>
<div class="a" style="left:1624px;top:727px;width:78px;height:18px;background:#2b2b2b;border-radius:2px"></div>
<div class="t" style="left:1629px;top:731px;font-size:11px;color:#e6e6e6;;letter-spacing:0.15px">0.000</div>
<div class="a" style="left:1706px;top:734px;width:174px;height:4px;background:#2b2b2b;border-radius:2px"></div>
<div class="a" style="left:1705px;top:730px;width:8px;height:13px;background:#bdbdbd;border-radius:2px"></div>
<div class="t" style="right:299px;top:755px;font-size:11px;color:#c8c8c8;;letter-spacing:0.15px">Uv Offset</div>
<div class="a" style="left:1624px;top:751px;width:78px;height:18px;background:#2b2b2b;border-radius:2px"></div>
<div class="t" style="left:1629px;top:755px;font-size:11px;color:#e6e6e6;;letter-spacing:0.15px">0.000</div>
<div class="a" style="left:1706px;top:758px;width:174px;height:4px;background:#2b2b2b;border-radius:2px"></div>
<div class="a" style="left:1705px;top:754px;width:8px;height:13px;background:#bdbdbd;border-radius:2px"></div>
<div class="t" style="right:299px;top:779px;font-size:11px;color:#c8c8c8;;letter-spacing:0.15px">Uv Offset</div>
<div class="a" style="left:1624px;top:775px;width:78px;height:18px;background:#2b2b2b;border-radius:2px"></div>
<div class="t" style="left:1629px;top:779px;font-size:11px;color:#e6e6e6;;letter-spacing:0.15px">0.000</div>
<div class="a" style="left:1706px;top:782px;width:174px;height:4px;background:#2b2b2b;border-radius:2px"></div>
<div class="a" style="left:1705px;top:778px;width:8px;height:13px;background:#bdbdbd;border-radius:2px"></div>
<div class="t" style="right:299px;top:803px;font-size:11px;color:#c8c8c8;;letter-spacing:0.15px">Uv Scale</div>
<div class="a" style="left:1624px;top:799px;width:78px;height:18px;background:#2b2b2b;border-radius:2px"></div>
<div class="t" style="left:1629px;top:803px;font-size:11px;color:#e6e6e6;;letter-spacing:0.15px">4.000</div>
<div class="a" style="left:1706px;top:806px;width:174px;height:4px;background:#2b2b2b;border-radius:2px"></div>
<div class="a" style="left:1873px;top:802px;width:8px;height:13px;background:#bdbdbd;border-radius:2px"></div>
<div class="t" style="right:299px;top:827px;font-size:11px;color:#c8c8c8;;letter-spacing:0.15px">Uv Scale</div>
<div class="a" style="left:1624px;top:823px;width:78px;height:18px;background:#2b2b2b;border-radius:2px"></div>
<div class="t" style="left:1629px;top:827px;font-size:11px;color:#e6e6e6;;letter-spacing:0.15px">4.000</div>
<div class="a" style="left:1706px;top:830px;width:174px;height:4px;background:#2b2b2b;border-radius:2px"></div>
<div class="a" style="left:1873px;top:826px;width:8px;height:13px;background:#bdbdbd;border-radius:2px"></div>
<div class="a" style="left:1489px;top:845px;width:397px;height:20px;background:#5d5d5d;border-radius:2px"></div>
<svg class="a" style="left:1496px;top:851px;" width="12" height="7" viewBox="0 0 12 7"><path d="M0.5 0.5h11L6 6.5z" fill="#e8e8e8"/></svg>
<div class="t" style="left:1517px;top:850.5px;font-size:11px;color:#d2d2d2;font-weight:bold;letter-spacing:0.15px">Textures</div>
<div class="t" style="right:288px;top:873px;font-size:11px;color:#c8c8c8;;letter-spacing:0.15px">Color Map</div>
<div class="a" style="left:1635px;top:870px;width:212px;height:19px;background:#2b2b2b;border:1px solid #5c86a8;border-radius:2px"></div>
<div class="a" style="left:1640px;top:873px;width:24px;height:13px;background:#5a7fa6;"></div>
<div class="t" style="left:1641px;top:875px;font-size:11px;color:#f0f0f0;;letter-spacing:0.15px">file4</div>
<div class="a" style="left:1663px;top:873px;width:1px;height:13px;background:#ffffff;"></div>
<svg class="a" style="left:1852px;top:873px;" width="15" height="12" viewBox="0 0 15 12"><rect x="4.5" y="0.5" width="10" height="11" fill="none" stroke="#111"/><path d="M0 2.5l6 3.5-6 3.5z" fill="#111"/></svg>
<div class="t" style="right:288px;top:898px;font-size:11px;color:#c8c8c8;;letter-spacing:0.15px">Normal Map</div>
<div class="a" style="left:1635px;top:895px;width:212px;height:17px;background:#2b2b2b;border-radius:2px"></div>
<div class="t" style="left:1640px;top:898px;font-size:11px;color:#e6e6e6;;letter-spacing:0.15px">file5</div>
<svg class="a" style="left:1852px;top:898px;" width="15" height="12" viewBox="0 0 15 12"><rect x="4.5" y="0.5" width="10" height="11" fill="none" stroke="#111"/><path d="M0 2.5l6 3.5-6 3.5z" fill="#111"/></svg>
<div class="t" style="right:288px;top:922px;font-size:11px;color:#c8c8c8;;letter-spacing:0.15px">Metallic Map</div>
<div class="a" style="left:1635px;top:919px;width:212px;height:17px;background:#2b2b2b;border-radius:2px"></div>
<svg class="a" style="left:1853px;top:922px;" width="12" height="12" viewBox="0 0 12 12"><rect x="0" y="0" width="12" height="12" rx="1" fill="#fff"/><rect x="6" y="1" width="5" height="5" fill="#000"/><rect x="1" y="6" width="5" height="5" fill="#000"/></svg>
<div class="t" style="right:288px;top:946px;font-size:11px;color:#c8c8c8;;letter-spacing:0.15px">Roughness Map</div>
<div class="a" style="left:1635px;top:943px;width:212px;height:17px;background:#2b2b2b;border-radius:2px"></div>
<svg class="a" style="left:1853px;top:946px;" width="12" height="12" viewBox="0 0 12 12"><rect x="0" y="0" width="12" height="12" rx="1" fill="#fff"/><rect x="6" y="1" width="5" height="5" fill="#000"/><rect x="1" y="6" width="5" height="5" fill="#000"/></svg>
<div class="t" style="right:288px;top:970px;font-size:11px;color:#c8c8c8;;letter-spacing:0.15px">Emissive Map</div>
<div class="a" style="left:1635px;top:967px;width:212px;height:17px;background:#2b2b2b;border-radius:2px"></div>
<svg class="a" style="left:1853px;top:970px;" width="12" height="12" viewBox="0 0 12 12"><rect x="0" y="0" width="12" height="12" rx="1" fill="#fff"/><rect x="6" y="1" width="5" height="5" fill="#000"/><rect x="1" y="6" width="5" height="5" fill="#000"/></svg>
<div class="t" style="right:288px;top:994px;font-size:11px;color:#c8c8c8;;letter-spacing:0.15px">Ao Map</div>
<div class="a" style="left:1635px;top:991px;width:212px;height:17px;background:#2b2b2b;border-radius:2px"></div>
<svg class="a" style="left:1853px;top:994px;" width="12" height="12" viewBox="0 0 12 12"><rect x="0" y="0" width="12" height="12" rx="1" fill="#fff"/><rect x="6" y="1" width="5" height="5" fill="#000"/><rect x="1" y="6" width="5" height="5" fill="#000"/></svg>
<div class="a" style="left:1489px;top:1013px;width:397px;height:16px;background:#5d5d5d;border-radius:2px"></div>
<svg class="a" style="left:1496px;top:1019px;" width="12" height="7" viewBox="0 0 12 7"><path d="M0.5 0.5h11L6 6.5z" fill="#e8e8e8"/></svg>
<div class="t" style="left:1517px;top:1018.5px;font-size:11px;color:#d2d2d2;font-weight:bold;letter-spacing:0.15px">Textures Global</div>
<div class="dots" style="left:8px;top:295px;width:165px"></div>
<div class="t" style="left:179px;top:294px;font-size:9px;color:#bdbdbd;">Create</div>
<div class="dots" style="left:212px;top:295px;width:164px"></div>
<svg class="a" style="left:381px;top:290px;" width="13" height="13" viewBox="0 0 13 13"><rect x="0.5" y="0.5" width="12" height="12" rx="3" fill="#474747" stroke="#2a2a2a"/><rect x="2.5" y="6.5" width="5.5" height="4" fill="none" stroke="#c9d3d8" stroke-width="1.2"/><rect x="2" y="6" width="6.5" height="1.8" fill="#c9d3d8"/><path d="M5.5 3h4.5v4" fill="none" stroke="#c9d3d8" stroke-width="1.3"/></svg>
<svg class="a" style="left:396px;top:290px;" width="13" height="13" viewBox="0 0 13 13"><rect x="0.5" y="0.5" width="12" height="12" rx="3" fill="#474747" stroke="#2a2a2a"/><path d="M3.5 3.5l6 6M9.5 3.5l-6 6" stroke="#c9d3d8" stroke-width="1.6"/></svg>
<div class="a" style="left:411px;top:287px;width:1px;height:753px;background:#363636;"></div>
<div class="a" style="left:18px;top:319px;width:171px;height:18px;background:#2b2b2b;border-radius:2px"></div>
<div class="a" style="left:198px;top:326px;width:173px;height:4px;background:#2b2b2b;border-radius:2px"></div>
<div class="a" style="left:282px;top:322px;width:7px;height:13px;background:#bdbdbd;border-radius:2px"></div>
<div class="a" style="left:13px;top:347px;width:119px;height:662px;background:#282828;"></div>
<div class="a" style="left:14px;top:348px;width:117px;height:660px;background:#3c3c3c;"></div>
<div class="a" style="left:15px;top:349px;width:115px;height:658px;background:#2b2b2b;"></div>
<div class="a" style="left:15px;top:350px;width:115px;height:11px;background:#5a5a5a;border-radius:1px"></div>
<svg class="a" style="left:17px;top:352px;" width="10" height="6" viewBox="0 0 10 6"><path d="M0.5 0.5h9L5 5.5z" fill="#e0e0e0"/></svg>
<div class="t" style="left:34px;top:351px;font-size:11px;color:#d0d0d0;;letter-spacing:0.15px">Favorites</div>
<svg class="a" style="left:28px;top:364px;" width="5" height="9" viewBox="0 0 5 9"><path d="M0.5 0.5v8L4.5 4.5z" fill="#e8e8e8"/></svg>
<div class="t" style="left:36px;top:364px;font-size:11px;color:#e0e0e0;;letter-spacing:0.15px">Maya</div>
<div class="a" style="left:15px;top:376px;width:115px;height:11px;background:#5a5a5a;border-radius:1px"></div>
<svg class="a" style="left:17px;top:378px;" width="10" height="6" viewBox="0 0 10 6"><path d="M0.5 0.5h9L5 5.5z" fill="#e0e0e0"/></svg>
<div class="t" style="left:34px;top:377px;font-size:11px;color:#d0d0d0;;letter-spacing:0.15px">Maya</div>
<div class="t" style="left:36px;top:390px;font-size:11px;color:#e0e0e0;;letter-spacing:0.15px">Surface</div>
<div class="t" style="left:36px;top:403px;font-size:11px;color:#e0e0e0;;letter-spacing:0.15px">Volumetric</div>
<div class="t" style="left:36px;top:416px;font-size:11px;color:#e0e0e0;;letter-spacing:0.15px">Displacement</div>
<div class="t" style="left:36px;top:429px;font-size:11px;color:#e0e0e0;;letter-spacing:0.15px">2D Textures</div>
<div class="t" style="left:36px;top:442px;font-size:11px;color:#e0e0e0;;letter-spacing:0.15px">3D Textures</div>
<div class="t" style="left:36px;top:455px;font-size:11px;color:#e0e0e0;;letter-spacing:0.15px">Env Textures</div>
<div class="t" style="left:36px;top:468px;font-size:11px;color:#e0e0e0;;letter-spacing:0.15px">Other Textures</div>
<div class="t" style="left:36px;top:481px;font-size:11px;color:#e0e0e0;;letter-spacing:0.15px">Lights</div>
<div class="t" style="left:36px;top:494px;font-size:11px;color:#e0e0e0;;letter-spacing:0.15px">Utilities</div>
<div class="t" style="left:36px;top:507px;font-size:11px;color:#e0e0e0;;letter-spacing:0.15px">Image Planes</div>
<div class="t" style="left:36px;top:520px;font-size:11px;color:#e0e0e0;;letter-spacing:0.15px">Glow</div>
<div class="t" style="left:36px;top:533px;font-size:11px;color:#e0e0e0;;letter-spacing:0.15px">Rendering</div>
<div class="a" style="left:15px;top:545px;width:115px;height:11px;background:#5a5a5a;border-radius:1px"></div>
<svg class="a" style="left:17px;top:547px;" width="10" height="6" viewBox="0 0 10 6"><path d="M0.5 0.5h9L5 5.5z" fill="#e0e0e0"/></svg>
<div class="t" style="left:34px;top:546px;font-size:11px;color:#d0d0d0;;letter-spacing:0.15px">Arnold</div>
<svg class="a" style="left:28px;top:559px;" width="5" height="9" viewBox="0 0 5 9"><path d="M0.5 0.5v8L4.5 4.5z" fill="#e8e8e8"/></svg>
<div class="t" style="left:36px;top:559px;font-size:11px;color:#e0e0e0;;letter-spacing:0.15px">Texture</div>
<svg class="a" style="left:28px;top:572px;" width="5" height="9" viewBox="0 0 5 9"><path d="M0.5 0.5v8L4.5 4.5z" fill="#e8e8e8"/></svg>
<div class="t" style="left:36px;top:572px;font-size:11px;color:#e0e0e0;;letter-spacing:0.15px">Light</div>
<svg class="a" style="left:28px;top:585px;" width="5" height="9" viewBox="0 0 5 9"><path d="M0.5 0.5v8L4.5 4.5z" fill="#e8e8e8"/></svg>
<div class="t" style="left:36px;top:585px;font-size:11px;color:#e0e0e0;;letter-spacing:0.15px">Shader</div>
<svg class="a" style="left:28px;top:598px;" width="5" height="9" viewBox="0 0 5 9"><path d="M0.5 0.5v8L4.5 4.5z" fill="#e8e8e8"/></svg>
<div class="t" style="left:36px;top:598px;font-size:11px;color:#e0e0e0;;letter-spacing:0.15px">Utility</div>
<div class="a" style="left:135px;top:565px;width:1px;height:222px;background:repeating-linear-gradient(180deg,#6a6a6a 0 1px,transparent 1px 3px)"></div>
<div class="a" style="left:139px;top:347px;width:262px;height:661px;background:#2b2b2b;border-radius:2px"></div>
<div class="a" style="left:387px;top:349px;width:12px;height:657px;background:#303030;"></div>
<svg class="a" style="left:387px;top:351px;" width="11" height="8" viewBox="0 0 11 8"><path d="M0.5 7.5L5.5 1.5 10.5 7.5z" fill="#c0c0c0"/></svg>
<div class="a" style="left:388px;top:362px;width:10px;height:49px;background:#4f4f4f;border-radius:4px"></div>
<svg class="a" style="left:387px;top:996px;" width="11" height="8" viewBox="0 0 11 8"><path d="M0.5 0.5L5.5 6.5 10.5 0.5z" fill="#c0c0c0"/></svg>
<div class="a" style="left:141px;top:347px;width:246px;height:24px;background:#5d5d5d;"></div>
<div class="a" style="left:141px;top:347px;width:246px;height:1px;background:#545454;"></div>
<div class="a" style="left:141px;top:348px;width:246px;height:1px;background:#666666;"></div>
<svg class="a" style="left:147px;top:354px;" width="14" height="14" viewBox="0 0 14 14"><defs><radialGradient id="sp1" cx="0.3" cy="0.45" r="0.6"><stop offset="0" stop-color="#d8d8d8"/><stop offset="0.3" stop-color="#8a8a8a"/><stop offset="1" stop-color="#3a3a3a"/></radialGradient></defs><circle cx="7" cy="7" r="7" fill="url(#sp1)"/><path d="M7 0A7 7 0 0 1 7 14z" fill="#1e1e1e" opacity="0.55"/></svg>
<div class="t" style="left:164px;top:357px;font-size:11px;color:#e0e0e0;;letter-spacing:0.15px">Shaderfx Game Hair</div>
<div class="a" style="left:141px;top:371px;width:246px;height:24px;background:#5d5d5d;"></div>
<div class="a" style="left:141px;top:371px;width:246px;height:1px;background:#545454;"></div>
<div class="a" style="left:141px;top:372px;width:246px;height:1px;background:#666666;"></div>
<svg class="a" style="left:147px;top:378px;" width="14" height="14" viewBox="0 0 14 14"><defs><radialGradient id="sp1" cx="0.3" cy="0.45" r="0.6"><stop offset="0" stop-color="#d8d8d8"/><stop offset="0.3" stop-color="#8a8a8a"/><stop offset="1" stop-color="#3a3a3a"/></radialGradient></defs><circle cx="7" cy="7" r="7" fill="url(#sp1)"/><path d="M7 0A7 7 0 0 1 7 14z" fill="#1e1e1e" opacity="0.55"/></svg>
<div class="t" style="left:164px;top:381px;font-size:11px;color:#e0e0e0;;letter-spacing:0.15px">Shaderfx Shader</div>
<div class="a" style="left:141px;top:395px;width:246px;height:24px;background:#5d5d5d;"></div>
<div class="a" style="left:141px;top:395px;width:246px;height:1px;background:#545454;"></div>
<div class="a" style="left:141px;top:396px;width:246px;height:1px;background:#666666;"></div>
<svg class="a" style="left:147px;top:402px;" width="14" height="14" viewBox="0 0 14 14"><defs><radialGradient id="sp1" cx="0.3" cy="0.45" r="0.6"><stop offset="0" stop-color="#d8d8d8"/><stop offset="0.3" stop-color="#8a8a8a"/><stop offset="1" stop-color="#3a3a3a"/></radialGradient></defs><circle cx="7" cy="7" r="7" fill="url(#sp1)"/><path d="M7 0A7 7 0 0 1 7 14z" fill="#1e1e1e" opacity="0.55"/></svg>
<div class="t" style="left:164px;top:405px;font-size:11px;color:#e0e0e0;;letter-spacing:0.15px">Stingray PBS</div>
<div class="a" style="left:141px;top:419px;width:246px;height:24px;background:#5d5d5d;"></div>
<div class="a" style="left:141px;top:419px;width:246px;height:1px;background:#545454;"></div>
<div class="a" style="left:141px;top:420px;width:246px;height:1px;background:#666666;"></div>
<svg class="a" style="left:147px;top:426px;" width="14" height="14" viewBox="0 0 14 14"><defs><radialGradient id="sp2" cx="0.35" cy="0.35" r="0.7"><stop offset="0" stop-color="#d8d8d8"/><stop offset="0.5" stop-color="#707070"/><stop offset="1" stop-color="#262626"/></radialGradient></defs><circle cx="7" cy="7" r="7" fill="url(#sp2)"/><path d="M2 7q5-2 10 0" stroke="#e0e0e0" stroke-width="1.2" fill="none"/></svg>
<div class="t" style="left:164px;top:429px;font-size:11px;color:#e0e0e0;;letter-spacing:0.15px">Anisotropic</div>
<div class="a" style="left:141px;top:443px;width:246px;height:24px;background:#5d5d5d;"></div>
<div class="a" style="left:141px;top:443px;width:246px;height:1px;background:#545454;"></div>
<div class="a" style="left:141px;top:444px;width:246px;height:1px;background:#666666;"></div>
<svg class="a" style="left:147px;top:450px;" width="14" height="14" viewBox="0 0 14 14"><defs><radialGradient id="sp1" cx="0.3" cy="0.45" r="0.6"><stop offset="0" stop-color="#d8d8d8"/><stop offset="0.3" stop-color="#8a8a8a"/><stop offset="1" stop-color="#3a3a3a"/></radialGradient></defs><circle cx="7" cy="7" r="7" fill="url(#sp1)"/><path d="M7 0A7 7 0 0 1 7 14z" fill="#1e1e1e" opacity="0.55"/></svg>
<div class="t" style="left:164px;top:453px;font-size:11px;color:#e0e0e0;;letter-spacing:0.15px">Bifrost Aero Material</div>
<div class="a" style="left:141px;top:467px;width:246px;height:24px;background:#5d5d5d;"></div>
<div class="a" style="left:141px;top:467px;width:246px;height:1px;background:#545454;"></div>
<div class="a" style="left:141px;top:468px;width:246px;height:1px;background:#666666;"></div>
<svg class="a" style="left:147px;top:474px;" width="14" height="14" viewBox="0 0 14 14"><defs><radialGradient id="sp1" cx="0.3" cy="0.45" r="0.6"><stop offset="0" stop-color="#d8d8d8"/><stop offset="0.3" stop-color="#8a8a8a"/><stop offset="1" stop-color="#3a3a3a"/></radialGradient></defs><circle cx="7" cy="7" r="7" fill="url(#sp1)"/><path d="M7 0A7 7 0 0 1 7 14z" fill="#1e1e1e" opacity="0.55"/></svg>
<div class="t" style="left:164px;top:477px;font-size:11px;color:#e0e0e0;;letter-spacing:0.15px">Bifrost Foam Material</div>
<div class="a" style="left:141px;top:491px;width:246px;height:24px;background:#5d5d5d;"></div>
<div class="a" style="left:141px;top:491px;width:246px;height:1px;background:#545454;"></div>
<div class="a" style="left:141px;top:492px;width:246px;height:1px;background:#666666;"></div>
<svg class="a" style="left:147px;top:498px;" width="14" height="14" viewBox="0 0 14 14"><defs><radialGradient id="sp1" cx="0.3" cy="0.45" r="0.6"><stop offset="0" stop-color="#d8d8d8"/><stop offset="0.3" stop-color="#8a8a8a"/><stop offset="1" stop-color="#3a3a3a"/></radialGradient></defs><circle cx="7" cy="7" r="7" fill="url(#sp1)"/><path d="M7 0A7 7 0 0 1 7 14z" fill="#1e1e1e" opacity="0.55"/></svg>
<div class="t" style="left:164px;top:501px;font-size:11px;color:#e0e0e0;;letter-spacing:0.15px">Bifrost Liquid Material</div>
<div class="a" style="left:141px;top:515px;width:246px;height:24px;background:#5d5d5d;"></div>
<div class="a" style="left:141px;top:515px;width:246px;height:1px;background:#545454;"></div>
<div class="a" style="left:141px;top:516px;width:246px;height:1px;background:#666666;"></div>
<svg class="a" style="left:147px;top:522px;" width="14" height="14" viewBox="0 0 14 14"><defs><radialGradient id="sp1" cx="0.3" cy="0.45" r="0.6"><stop offset="0" stop-color="#d8d8d8"/><stop offset="0.3" stop-color="#8a8a8a"/><stop offset="1" stop-color="#3a3a3a"/></radialGradient></defs><circle cx="7" cy="7" r="7" fill="url(#sp1)"/><path d="M7 0A7 7 0 0 1 7 14z" fill="#1e1e1e" opacity="0.55"/></svg>
<div class="t" style="left:164px;top:525px;font-size:11px;color:#e0e0e0;;letter-spacing:0.15px">Blinn</div>
<div class="a" style="left:141px;top:539px;width:246px;height:24px;background:#5d5d5d;"></div>
<div class="a" style="left:141px;top:539px;width:246px;height:1px;background:#545454;"></div>
<div class="a" style="left:141px;top:540px;width:246px;height:1px;background:#666666;"></div>
<svg class="a" style="left:147px;top:546px;" width="14" height="14" viewBox="0 0 14 14"><circle cx="7" cy="7" r="6.8" fill="#e0d0b8" stroke="#333" stroke-width="0.5"/><circle cx="7" cy="7.5" r="5" fill="#8a7060"/><path d="M3 9q4 4 8 0" fill="#c0b090"/><path d="M5 4h5l-1 3H6z" fill="#707a30"/></svg>
<div class="t" style="left:164px;top:549px;font-size:11px;color:#e0e0e0;;letter-spacing:0.15px">Cgfx Shader</div>
<div class="a" style="left:141px;top:563px;width:246px;height:24px;background:#5d5d5d;"></div>
<div class="a" style="left:141px;top:563px;width:246px;height:1px;background:#545454;"></div>
<div class="a" style="left:141px;top:564px;width:246px;height:1px;background:#666666;"></div>
<svg class="a" style="left:146px;top:569px;" width="16" height="16" viewBox="0 0 16 16"><rect width="16" height="16" rx="1" fill="#111"/><circle cx="8" cy="8.5" r="5.5" fill="#c8b8a0"/><path d="M5 4h6l1 4H8z" fill="#8aa040"/><path d="M4 10q4 3 8 0" fill="#e0d0c0"/></svg>
<div class="t" style="left:164px;top:573px;font-size:11px;color:#e0e0e0;;letter-spacing:0.15px">DirectX 11 Shader</div>
<div class="a" style="left:141px;top:587px;width:246px;height:24px;background:#5d5d5d;"></div>
<div class="a" style="left:141px;top:587px;width:246px;height:1px;background:#545454;"></div>
<div class="a" style="left:141px;top:588px;width:246px;height:1px;background:#666666;"></div>
<svg class="a" style="left:147px;top:594px;" width="14" height="14" viewBox="0 0 14 14"><defs><radialGradient id="sp1" cx="0.3" cy="0.45" r="0.6"><stop offset="0" stop-color="#d8d8d8"/><stop offset="0.3" stop-color="#8a8a8a"/><stop offset="1" stop-color="#3a3a3a"/></radialGradient></defs><circle cx="7" cy="7" r="7" fill="url(#sp1)"/><path d="M7 0A7 7 0 0 1 7 14z" fill="#1e1e1e" opacity="0.55"/></svg>
<div class="t" style="left:164px;top:597px;font-size:11px;color:#e0e0e0;;letter-spacing:0.15px">Hair Physical Shader</div>
<div class="a" style="left:141px;top:611px;width:246px;height:24px;background:#5d5d5d;"></div>
<div class="a" style="left:141px;top:611px;width:246px;height:1px;background:#545454;"></div>
<div class="a" style="left:141px;top:612px;width:246px;height:1px;background:#666666;"></div>
<svg class="a" style="left:147px;top:618px;" width="14" height="14" viewBox="0 0 14 14"><circle cx="7" cy="7" r="7" fill="#7a5028"/><path d="M0.5 8.5q6.5 3 13 0" stroke="#e8c898" stroke-width="1.8" fill="none"/></svg>
<div class="t" style="left:164px;top:621px;font-size:11px;color:#e0e0e0;;letter-spacing:0.15px">Hair Tube Shader</div>
<div class="a" style="left:141px;top:635px;width:246px;height:24px;background:#5d5d5d;"></div>
<div class="a" style="left:141px;top:635px;width:246px;height:1px;background:#545454;"></div>
<div class="a" style="left:141px;top:636px;width:246px;height:1px;background:#666666;"></div>
<svg class="a" style="left:147px;top:642px;" width="14" height="14" viewBox="0 0 14 14"><defs><radialGradient id="sp3" cx="0.4" cy="0.35" r="0.7"><stop offset="0" stop-color="#8a8a8a"/><stop offset="0.6" stop-color="#555"/><stop offset="1" stop-color="#222"/></radialGradient></defs><circle cx="7" cy="7" r="7" fill="url(#sp3)"/></svg>
<div class="t" style="left:164px;top:645px;font-size:11px;color:#e0e0e0;;letter-spacing:0.15px">Lambert</div>
<div class="a" style="left:141px;top:659px;width:246px;height:24px;background:#5d5d5d;"></div>
<div class="a" style="left:141px;top:659px;width:246px;height:1px;background:#545454;"></div>
<div class="a" style="left:141px;top:660px;width:246px;height:1px;background:#666666;"></div>
<svg class="a" style="left:147px;top:666px;" width="14" height="14" viewBox="0 0 14 14"><circle cx="7" cy="7" r="7" fill="#5a50a8"/><path d="M7 0A7 7 0 0 0 1.5 11.5L11.5 1.5A7 7 0 0 0 7 0z" fill="#9a9a9a"/><path d="M2.5 11L11 2.5" stroke="#e8e890" stroke-width="2.2"/></svg>
<div class="t" style="left:164px;top:669px;font-size:11px;color:#e0e0e0;;letter-spacing:0.15px">Layered Shader</div>
<div class="a" style="left:141px;top:683px;width:246px;height:24px;background:#5d5d5d;"></div>
<div class="a" style="left:141px;top:683px;width:246px;height:1px;background:#545454;"></div>
<div class="a" style="left:141px;top:684px;width:246px;height:1px;background:#666666;"></div>
<svg class="a" style="left:147px;top:690px;" width="14" height="14" viewBox="0 0 14 14"><defs><radialGradient id="oc" cx="0.4" cy="0.35" r="0.7"><stop offset="0" stop-color="#20b0c0"/><stop offset="1" stop-color="#05505a"/></radialGradient></defs><circle cx="7" cy="7" r="7" fill="url(#oc)"/><path d="M3 5l2 1M8 3l2 1M4 9l2-1M9 8l2 1M6 12l2-1" stroke="#40d0e0" stroke-width="0.8" opacity="0.7"/></svg>
<div class="t" style="left:164px;top:693px;font-size:11px;color:#e0e0e0;;letter-spacing:0.15px">Ocean Shader</div>
<div class="a" style="left:141px;top:707px;width:246px;height:24px;background:#5d5d5d;"></div>
<div class="a" style="left:141px;top:707px;width:246px;height:1px;background:#545454;"></div>
<div class="a" style="left:141px;top:708px;width:246px;height:1px;background:#666666;"></div>
<svg class="a" style="left:147px;top:714px;" width="14" height="14" viewBox="0 0 14 14"><defs><radialGradient id="sp1" cx="0.3" cy="0.45" r="0.6"><stop offset="0" stop-color="#d8d8d8"/><stop offset="0.3" stop-color="#8a8a8a"/><stop offset="1" stop-color="#3a3a3a"/></radialGradient></defs><circle cx="7" cy="7" r="7" fill="url(#sp1)"/><path d="M7 0A7 7 0 0 1 7 14z" fill="#1e1e1e" opacity="0.55"/></svg>
<div class="t" style="left:164px;top:717px;font-size:11px;color:#e0e0e0;;letter-spacing:0.15px">Phong</div>
<div class="a" style="left:141px;top:731px;width:246px;height:24px;background:#5d5d5d;"></div>
<div class="a" style="left:141px;top:731px;width:246px;height:1px;background:#545454;"></div>
<div class="a" style="left:141px;top:732px;width:246px;height:1px;background:#666666;"></div>
<svg class="a" style="left:147px;top:738px;" width="14" height="14" viewBox="0 0 14 14"><defs><radialGradient id="sp1" cx="0.3" cy="0.45" r="0.6"><stop offset="0" stop-color="#d8d8d8"/><stop offset="0.3" stop-color="#8a8a8a"/><stop offset="1" stop-color="#3a3a3a"/></radialGradient></defs><circle cx="7" cy="7" r="7" fill="url(#sp1)"/><path d="M7 0A7 7 0 0 1 7 14z" fill="#1e1e1e" opacity="0.55"/></svg>
<div class="t" style="left:164px;top:741px;font-size:11px;color:#e0e0e0;;letter-spacing:0.15px">Phong E</div>
<div class="a" style="left:141px;top:755px;width:246px;height:24px;background:#5d5d5d;"></div>
<div class="a" style="left:141px;top:755px;width:246px;height:1px;background:#545454;"></div>
<div class="a" style="left:141px;top:756px;width:246px;height:1px;background:#666666;"></div>
<svg class="a" style="left:147px;top:762px;" width="14" height="14" viewBox="0 0 14 14"><circle cx="7" cy="7" r="6.5" fill="#40b040"/><circle cx="7" cy="7" r="4.5" fill="#e0c030"/><circle cx="7" cy="7" r="2.5" fill="#e03020"/></svg>
<div class="t" style="left:164px;top:765px;font-size:11px;color:#e0e0e0;;letter-spacing:0.15px">Ramp Shader</div>
<div class="a" style="left:141px;top:779px;width:246px;height:24px;background:#5d5d5d;"></div>
<div class="a" style="left:141px;top:779px;width:246px;height:1px;background:#545454;"></div>
<div class="a" style="left:141px;top:780px;width:246px;height:1px;background:#666666;"></div>
<svg class="a" style="left:147px;top:786px;" width="14" height="14" viewBox="0 0 14 14"><circle cx="7" cy="7" r="7" fill="#c8c8c8"/></svg>
<div class="t" style="left:164px;top:789px;font-size:11px;color:#e0e0e0;;letter-spacing:0.15px">Shading Map</div>
<div class="a" style="left:141px;top:803px;width:246px;height:24px;background:#5d5d5d;"></div>
<div class="a" style="left:141px;top:803px;width:246px;height:1px;background:#545454;"></div>
<div class="a" style="left:141px;top:804px;width:246px;height:1px;background:#666666;"></div>
<svg class="a" style="left:147px;top:810px;" width="14" height="14" viewBox="0 0 14 14"><circle cx="7" cy="7" r="7" fill="#000"/></svg>
<div class="t" style="left:164px;top:813px;font-size:11px;color:#e0e0e0;;letter-spacing:0.15px">Surface Shader</div>
<div class="a" style="left:141px;top:827px;width:246px;height:24px;background:#5d5d5d;"></div>
<div class="a" style="left:141px;top:827px;width:246px;height:1px;background:#545454;"></div>
<div class="a" style="left:141px;top:828px;width:246px;height:1px;background:#666666;"></div>
<svg class="a" style="left:147px;top:834px;" width="14" height="14" viewBox="0 0 14 14"><path d="M0 11l6-3 8 3-6 3z" fill="#2a8a9a"/><circle cx="8" cy="6" r="5.5" fill="#d0d0d0"/></svg>
<div class="t" style="left:164px;top:837px;font-size:11px;color:#e0e0e0;;letter-spacing:0.15px">Use Background</div>
<div class="a" style="left:141px;top:851px;width:246px;height:24px;background:#5d5d5d;"></div>
<div class="a" style="left:141px;top:851px;width:246px;height:1px;background:#545454;"></div>
<div class="a" style="left:141px;top:852px;width:246px;height:1px;background:#666666;"></div>
<svg class="a" style="left:147px;top:858px;" width="14" height="14" viewBox="0 0 14 14"><rect x="0" y="1" width="8" height="8" fill="#40a0b0"/><rect x="5" y="5" width="8" height="8" fill="#60c0d0" stroke="#2a6a7a"/></svg>
<div class="t" style="left:164px;top:861px;font-size:11px;color:#e0e0e0;;letter-spacing:0.15px">Env Fog</div>
<div class="a" style="left:141px;top:875px;width:246px;height:24px;background:#5d5d5d;"></div>
<div class="a" style="left:141px;top:875px;width:246px;height:1px;background:#545454;"></div>
<div class="a" style="left:141px;top:876px;width:246px;height:1px;background:#666666;"></div>
<svg class="a" style="left:147px;top:882px;" width="14" height="14" viewBox="0 0 14 14"><rect x="1.5" y="1.5" width="11" height="11" fill="none" stroke="#e07050" stroke-width="1.3"/><path d="M1.5 7h11M7 1.5v11" stroke="#e07050"/></svg>
<div class="t" style="left:164px;top:885px;font-size:11px;color:#e0e0e0;;letter-spacing:0.15px">Fluid Shape</div>
<div class="a" style="left:141px;top:899px;width:246px;height:24px;background:#5d5d5d;"></div>
<div class="a" style="left:141px;top:899px;width:246px;height:1px;background:#545454;"></div>
<div class="a" style="left:141px;top:900px;width:246px;height:1px;background:#666666;"></div>
<svg class="a" style="left:147px;top:906px;" width="14" height="14" viewBox="0 0 14 14"><path d="M13 1L1 8l5 5z" fill="#40b0c0"/></svg>
<div class="t" style="left:164px;top:909px;font-size:11px;color:#e0e0e0;;letter-spacing:0.15px">Light Fog</div>
<div class="a" style="left:141px;top:923px;width:246px;height:24px;background:#5d5d5d;"></div>
<div class="a" style="left:141px;top:923px;width:246px;height:1px;background:#545454;"></div>
<div class="a" style="left:141px;top:924px;width:246px;height:1px;background:#666666;"></div>
<svg class="a" style="left:147px;top:930px;" width="14" height="14" viewBox="0 0 14 14"><g fill="#e07060"><circle cx="7" cy="2" r="1.5"/><circle cx="2" cy="7" r="1.5"/><circle cx="12" cy="7" r="1.5"/><circle cx="7" cy="12" r="1.5"/><circle cx="3.5" cy="3.5" r="1.2"/><circle cx="10.5" cy="10.5" r="1.2"/><circle cx="10.5" cy="3.5" r="1.2"/><circle cx="3.5" cy="10.5" r="1.2"/><circle cx="7" cy="7" r="1.5"/></g></svg>
<div class="t" style="left:164px;top:933px;font-size:11px;color:#e0e0e0;;letter-spacing:0.15px">Particle Cloud</div>
<div class="a" style="left:141px;top:947px;width:246px;height:24px;background:#5d5d5d;"></div>
<div class="a" style="left:141px;top:947px;width:246px;height:1px;background:#545454;"></div>
<div class="a" style="left:141px;top:948px;width:246px;height:1px;background:#666666;"></div>
<svg class="a" style="left:147px;top:954px;" width="14" height="14" viewBox="0 0 14 14"><rect x="2" y="1" width="10" height="12" rx="3" fill="#40b0c0"/><path d="M2 4q5 2 10 0" stroke="#2a7080" fill="none"/></svg>
<div class="t" style="left:164px;top:957px;font-size:11px;color:#e0e0e0;;letter-spacing:0.15px">Volume Fog</div>
<div class="a" style="left:141px;top:971px;width:246px;height:24px;background:#5d5d5d;"></div>
<div class="a" style="left:141px;top:971px;width:246px;height:1px;background:#545454;"></div>
<div class="a" style="left:141px;top:972px;width:246px;height:1px;background:#666666;"></div>
<svg class="a" style="left:147px;top:978px;" width="14" height="14" viewBox="0 0 14 14"><circle cx="7" cy="7" r="7" fill="#000"/></svg>
<div class="t" style="left:164px;top:981px;font-size:11px;color:#e0e0e0;;letter-spacing:0.15px">Volume Shader</div>
<div class="a" style="left:141px;top:995px;width:246px;height:11px;background:#5d5d5d;"></div>
<div class="a" style="left:141px;top:995px;width:246px;height:1px;background:#545454;"></div>
<div class="a" style="left:141px;top:996px;width:246px;height:1px;background:#666666;"></div>
<div class="a" style="left:141px;top:995px;width:246px;height:11px;overflow:hidden"><div class="t" style="left:23px;top:8px;font-size:11px;color:#e0e0e0">PxMaterial Shader</div><svg class="a" style="left:6px;top:5px" width="14" height="8"><path d="M1 8q5-6 12-5" stroke="#40b0c0" stroke-width="2" fill="none"/></svg></div>
<div class="a" style="left:105px;top:1018px;width:306px;height:1px;background:#333333;"></div>
<div class="t" style="left:16px;top:1023px;font-size:11px;color:#f0f0f0;;letter-spacing:0.15px">Create</div>
<div class="a" style="left:62px;top:1018px;width:1px;height:18px;background:#333333;"></div>
<div class="t" style="left:73px;top:1023px;font-size:11px;color:#a0a0a0;;letter-spacing:0.15px">Bins</div>
<div class="a" style="left:105px;top:1018px;width:1px;height:18px;background:#333333;"></div>
<div class="a" style="left:429px;top:299px;width:1px;height:20px;background:#8a8a8a;"></div>
<div class="a" style="left:428px;top:304px;width:3px;height:10px;background:#8a8a8a;border-radius:1px"></div>
<div class="a" style="left:520px;top:299px;width:1px;height:20px;background:#8a8a8a;"></div>
<div class="a" style="left:519px;top:304px;width:3px;height:10px;background:#8a8a8a;border-radius:1px"></div>
<div class="a" style="left:665px;top:299px;width:1px;height:20px;background:#8a8a8a;"></div>
<div class="a" style="left:664px;top:304px;width:3px;height:10px;background:#8a8a8a;border-radius:1px"></div>
<div class="a" style="left:837px;top:299px;width:1px;height:20px;background:#8a8a8a;"></div>
<div class="a" style="left:836px;top:304px;width:3px;height:10px;background:#8a8a8a;border-radius:1px"></div>
<div class="a" style="left:928px;top:299px;width:1px;height:20px;background:#8a8a8a;"></div>
<div class="a" style="left:927px;top:304px;width:3px;height:10px;background:#8a8a8a;border-radius:1px"></div>
<svg class="a" style="left:439px;top:300px;" width="20" height="18" viewBox="0 0 20 18"><rect x="2.6" y="2.6" width="14.5" height="13.7" fill="none" stroke="#d6d6d6" stroke-width="1.4"/><path d="M1 5l6.5 3.9L1 12.8z" fill="#bdbdbd"/></svg>
<svg class="a" style="left:465px;top:300px;" width="21" height="18" viewBox="0 0 21 18"><rect x="2.7" y="2.6" width="14.3" height="13.7" fill="none" stroke="#d6d6d6" stroke-width="1.4"/><path d="M1 5l5.6 3.9L1 12.8z" fill="#bdbdbd"/><path d="M13 5l6 3.9L13 12.8z" fill="#bdbdbd"/></svg>
<svg class="a" style="left:492px;top:300px;" width="21" height="18" viewBox="0 0 21 18"><rect x="2.5" y="2.6" width="14.6" height="13.7" fill="none" stroke="#d6d6d6" stroke-width="1.4"/><path d="M13 5l6 3.9L13 12.8z" fill="#bdbdbd"/></svg>
<svg class="a" style="left:531px;top:301px;" width="16" height="16" viewBox="0 0 16 16"><path d="M1 4.5V1h3.5M11.5 1H15v3.5M15 11.5V15h-3.5M4.5 15H1v-3.5" stroke="#d6d6d6" stroke-width="1.3" fill="none"/><path d="M1 1h14v14H1z" stroke="#d6d6d6" stroke-width="1.3" fill="none" stroke-dasharray="5 4" stroke-dashoffset="-1"/><path d="M5.5 3.2L6.6 6.6 10 7.7 6.6 8.8 5.5 12.2 4.4 8.8 1.2 7.7 4.4 6.6z" fill="#3fb8c8"/><path d="M11.5 1.5l.8 2.2 2.2.8-2.2.8-.8 2.2-.8-2.2-2.2-.8 2.2-.8z" fill="#3fb8c8"/><path d="M10.5 7.5l1 3 3 1-3 1-1 3-1-3-3-1 3-1z" fill="#3fb8c8"/></svg>
<svg class="a" style="left:557px;top:300px;" width="18" height="18" viewBox="0 0 18 18"><rect x="1" y="1" width="16" height="16" fill="none" stroke="#3fb8c8" stroke-width="1.3" stroke-dasharray="1.3 1.3"/><path d="M13 1.5v7M9.5 5h7" stroke="#3fb8c8" stroke-width="2.2"/><rect x="3.5" y="7" width="7.5" height="3.5" fill="#cfcfcf" stroke="#333" stroke-width="0.6"/><rect x="7" y="11.5" width="8" height="3.5" fill="#cfcfcf" stroke="#333" stroke-width="0.6"/></svg>
<svg class="a" style="left:584px;top:300px;" width="18" height="18" viewBox="0 0 18 18"><rect x="1" y="1" width="16" height="16" fill="none" stroke="#3fb8c8" stroke-width="1.3" stroke-dasharray="1.3 1.3"/><path d="M9.5 4.5h7" stroke="#3fb8c8" stroke-width="2.2"/><rect x="3.5" y="7" width="7.5" height="3.5" fill="#cfcfcf" stroke="#333" stroke-width="0.6"/><rect x="7" y="11.5" width="8" height="3.5" fill="#cfcfcf" stroke="#333" stroke-width="0.6"/></svg>
<svg class="a" style="left:611px;top:301px;" width="18" height="16" viewBox="0 0 18 16"><rect x="0.5" y="2.5" width="2.5" height="2.5" fill="#d6d6d6"/><rect x="2.5" y="6.8" width="2.5" height="2.5" fill="#d6d6d6"/><rect x="0.5" y="11" width="2.5" height="2.5" fill="#d6d6d6"/><path d="M5.5 8h6" stroke="#3fb8c8" stroke-width="2"/><path d="M9.5 4.5l4 3.5-4 3.5z" fill="#3fb8c8"/><rect x="15" y="2.5" width="2.3" height="2.3" fill="#3fb8c8"/><rect x="15" y="6.8" width="2.3" height="2.3" fill="#3fb8c8"/><rect x="15" y="11" width="2.3" height="2.3" fill="#3fb8c8"/></svg>
<svg class="a" style="left:638px;top:300px;" width="18" height="18" viewBox="0 0 18 18"><path d="M8 2.5H5.5v13H8" stroke="#d6d6d6" stroke-width="1.2" fill="none"/><rect x="5" y="1" width="12" height="3" fill="#d6d6d6" stroke="#333" stroke-width="0.5"/><rect x="5" y="14" width="12" height="3" fill="#d6d6d6" stroke="#333" stroke-width="0.5"/><circle cx="4.5" cy="9" r="3.8" fill="#3fb8c8"/></svg>
<svg class="a" style="left:676px;top:300px;" width="17" height="18" viewBox="0 0 17 18"><rect x="0.5" y="2.0" width="16" height="3.8" rx="1.9" fill="#c8c8c8" stroke="#2a2a2a" stroke-width="0.5"/><rect x="1" y="7.7" width="15" height="2.8" rx="1.4" fill="#2a2a2a" stroke="#c8c8c8" stroke-width="1.1"/><rect x="1" y="12.8" width="15" height="2.8" rx="1.4" fill="#2a2a2a" stroke="#c8c8c8" stroke-width="1.1"/></svg>
<svg class="a" style="left:703px;top:300px;" width="17" height="18" viewBox="0 0 17 18"><rect x="0.5" y="2.0" width="16" height="3.8" rx="1.9" fill="#c8c8c8" stroke="#2a2a2a" stroke-width="0.5"/><rect x="0.5" y="7.2" width="16" height="3.8" rx="1.9" fill="#c8c8c8" stroke="#2a2a2a" stroke-width="0.5"/><rect x="1" y="12.8" width="15" height="2.8" rx="1.4" fill="#2a2a2a" stroke="#c8c8c8" stroke-width="1.1"/></svg>
<svg class="a" style="left:730px;top:300px;" width="17" height="18" viewBox="0 0 17 18"><rect x="0.5" y="2.0" width="16" height="3.8" rx="1.9" fill="#c8c8c8" stroke="#2a2a2a" stroke-width="0.5"/><rect x="0.5" y="7.2" width="16" height="3.8" rx="1.9" fill="#c8c8c8" stroke="#2a2a2a" stroke-width="0.5"/><rect x="0.5" y="12.3" width="16" height="3.8" rx="1.9" fill="#c8c8c8" stroke="#2a2a2a" stroke-width="0.5"/></svg>
<svg class="a" style="left:757px;top:300px;" width="17" height="18" viewBox="0 0 17 18"><rect x="1" y="2.5" width="15" height="2.8" rx="1.4" fill="#2a2a2a" stroke="#c8c8c8" stroke-width="1.1"/><rect x="1" y="7.7" width="15" height="2.8" rx="1.4" fill="#2a2a2a" stroke="#c8c8c8" stroke-width="1.1"/><rect x="1" y="12.8" width="15" height="2.8" rx="1.4" fill="#2a2a2a" stroke="#c8c8c8" stroke-width="1.1"/></svg>
<svg class="a" style="left:783px;top:300px;" width="18" height="18" viewBox="0 0 18 18"><circle cx="7" cy="7.3" r="4.5" fill="none" stroke="#d6d6d6" stroke-width="1.7"/><path d="M10.3 10.6l5 5" stroke="#d6d6d6" stroke-width="2.1" stroke-linecap="round"/></svg>
<svg class="a" style="left:811px;top:301px;" width="16" height="16" viewBox="0 0 16 16"><path d="M2.7 5V2.7h11.6v11.6H8" stroke="#3fb8c8" stroke-width="1.3" fill="none"/><path d="M9 2.5a4.5 4.5 0 1 1 0 9v-4.5z" fill="#c8c8c8"/><path d="M9 3a4.5 4.5 0 0 0-4.5 4.5H9z" fill="#c8c8c8" opacity="0.6"/><rect x="2.5" y="8.2" width="6" height="6" fill="#444" stroke="#3fb8c8" stroke-width="1.3"/><rect x="4.5" y="10.2" width="2" height="2" fill="#c8c8c8"/></svg>
<svg class="a" style="left:847px;top:300px;" width="18" height="18" viewBox="0 0 18 18"><path d="M6.5 1v16M11.5 1v16M1 6.5h16M1 11.5h16" stroke="#5ec08a" stroke-width="1.3"/></svg>
<svg class="a" style="left:873px;top:300px;" width="20" height="19" viewBox="0 0 20 19"><path d="M13.3 8L8 2.7A4.2 4.2 0 0 0 2.1 8.6L7.4 13.9" stroke="#cfcfcf" stroke-width="2.6" fill="none"/><path d="M11 7.2l2.8 2.8M6.6 11.6l2.8 2.8" stroke="#444" stroke-width="0.8"/><path d="M10.5 8v11M15 8v11M7.5 10.5h11M7.5 15h11" stroke="#3fb8c8" stroke-width="1.3"/></svg>
<svg class="a" style="left:901px;top:300px;" width="18" height="18" viewBox="0 0 18 18"><path d="M3 9a6 6 0 0 1 10-4" stroke="#3e5a62" stroke-width="2.2" fill="none"/><path d="M0.5 6.5l3.5 4 3-3.5z" fill="#3e5a62"/><rect x="0" y="11" width="17" height="6" fill="#555"/><rect x="1.5" y="12" width="4" height="1.5" fill="#666"/><circle cx="12" cy="9.5" r="4" fill="#555" stroke="#444"/><path d="M12 7.5V9.5h1.5" stroke="#6a6a6a" fill="none"/></svg>
<svg class="a" style="left:938px;top:301px;" width="18" height="17" viewBox="0 0 18 17"><path d="M4 1.5h9.5a1 1 0 0 1 1 1v4M14.5 11v4a1 1 0 0 1-1 1H4" stroke="#cfcfcf" stroke-width="1.3" fill="none"/><path d="M3.5 4v9" stroke="#cfcfcf" stroke-width="1.3"/><path d="M1.5 1l4.5 2.7-4.5 2.7z" fill="#bdbdbd"/><path d="M1.5 10.5l4.5 2.7-4.5 2.7z" fill="#bdbdbd"/><path d="M12 5.5l5.5 3-5.5 3z" fill="#3fb8c8"/></svg>
<div class="a" style="left:962px;top:302px;width:176px;height:18px;background:#2b2b2b;border-radius:2px"></div>
<div class="t" style="left:965px;top:307px;font-size:11px;color:#9a9a9a;;letter-spacing:0.15px">Search...</div>
<svg class="a" style="left:1124px;top:307px;" width="10" height="6" viewBox="0 0 10 6"><path d="M0 0h10L5 6z" fill="#cfcfcf"/></svg>
<div class="a" style="left:426px;top:332px;width:1029px;height:694px;background:#3c3c3c;border:1px solid #2c2c2c"></div>
<div class="a" style="left:428px;top:334px;width:74px;height:17px;background:#474747;border-radius:2px 2px 0 0"></div>
<div class="t" style="left:438px;top:338px;font-size:11px;color:#ececec;;letter-spacing:0.15px">Untitled_1</div>
<div class="a" style="left:504px;top:334px;width:29px;height:17px;background:#3f3f3f;border-radius:2px 2px 0 0;border:1px solid #333;border-bottom:none"></div>
<div class="t" style="left:515px;top:337px;font-size:11px;color:#cfcfcf;;letter-spacing:0.15px">+</div>
<div class="a" style="left:428px;top:350px;width:1024px;height:673px;background:#303030;border:1px solid #282828;border-radius:2px"></div>
<div class="a" style="left:1465px;top:281px;width:1px;height:755px;background:#2f2f2f;"></div>
<svg class="a" style="left:0px;top:0px;pointer-events:none" width="1920" height="1040" viewBox="0 0 1920 1040"><path d="M715 574.4C770 574.4 780 646 837.5 646" stroke="#7b9a6b" stroke-width="1.5" fill="none"/><path d="M715 738.4C770 738.4 780 667 837.5 667" stroke="#7b9a6b" stroke-width="1.5" fill="none"/><path d="M1016.5 540.5H1139" stroke="#e00000" stroke-width="2"/></svg>
<div class="t" style="left:555px;top:492px;font-size:14px;color:#e8e8e8;">uv.png</div>
<div class="a" style="left:550px;top:512px;width:166px;height:103px;background:#000;border-radius:7px"></div>
<div class="a" style="left:552px;top:514px;width:162px;height:99px;background:#4d4d4d;border-radius:5px;overflow:hidden"><div class="a" style="left:0;top:51.5px;width:162px;height:21.5px;background:#616161"></div><div class="a" style="left:0;top:73px;width:162px;height:30px;background:#555555"></div></div>
<svg class="a" style="left:565px;top:515px;" width="26" height="26" viewBox="0 0 26 26"><rect x="0.00" y="0.00" width="3.35" height="3.35" fill="#ffffff"/><rect x="0.90" y="0.90" width="1.5" height="1.5" fill="#c0c0c0"/><rect x="3.25" y="0.00" width="3.35" height="3.35" fill="#ff0000"/><rect x="6.50" y="0.00" width="3.35" height="3.35" fill="#ffff00"/><rect x="9.75" y="0.00" width="3.35" height="3.35" fill="#00ff00"/><rect x="13.00" y="0.00" width="3.35" height="3.35" fill="#00ffff"/><rect x="16.25" y="0.00" width="3.35" height="3.35" fill="#0000ff"/><rect x="19.50" y="0.00" width="3.35" height="3.35" fill="#ff00ff"/><rect x="22.75" y="0.00" width="3.35" height="3.35" fill="#808080"/><rect x="23.65" y="0.90" width="1.5" height="1.5" fill="#c0c0c0"/><rect x="0.00" y="3.25" width="3.35" height="3.35" fill="#ff0000"/><rect x="3.25" y="3.25" width="3.35" height="3.35" fill="#ffff00"/><rect x="6.50" y="3.25" width="3.35" height="3.35" fill="#00ff00"/><rect x="9.75" y="3.25" width="3.35" height="3.35" fill="#00ffff"/><rect x="13.00" y="3.25" width="3.35" height="3.35" fill="#0000ff"/><rect x="16.25" y="3.25" width="3.35" height="3.35" fill="#ff00ff"/><rect x="19.50" y="3.25" width="3.35" height="3.35" fill="#808080"/><rect x="20.40" y="4.15" width="1.5" height="1.5" fill="#c0c0c0"/><rect x="22.75" y="3.25" width="3.35" height="3.35" fill="#ffffff"/><rect x="23.65" y="4.15" width="1.5" height="1.5" fill="#c0c0c0"/><rect x="0.00" y="6.50" width="3.35" height="3.35" fill="#ffff00"/><rect x="3.25" y="6.50" width="3.35" height="3.35" fill="#00ff00"/><rect x="6.50" y="6.50" width="3.35" height="3.35" fill="#00ffff"/><rect x="9.75" y="6.50" width="3.35" height="3.35" fill="#0000ff"/><rect x="13.00" y="6.50" width="3.35" height="3.35" fill="#ff00ff"/><rect x="16.25" y="6.50" width="3.35" height="3.35" fill="#808080"/><rect x="17.15" y="7.40" width="1.5" height="1.5" fill="#c0c0c0"/><rect x="19.50" y="6.50" width="3.35" height="3.35" fill="#ffffff"/><rect x="20.40" y="7.40" width="1.5" height="1.5" fill="#c0c0c0"/><rect x="22.75" y="6.50" width="3.35" height="3.35" fill="#ff0000"/><rect x="0.00" y="9.75" width="3.35" height="3.35" fill="#00ff00"/><rect x="3.25" y="9.75" width="3.35" height="3.35" fill="#00ffff"/><rect x="6.50" y="9.75" width="3.35" height="3.35" fill="#0000ff"/><rect x="9.75" y="9.75" width="3.35" height="3.35" fill="#ff00ff"/><rect x="13.00" y="9.75" width="3.35" height="3.35" fill="#808080"/><rect x="13.90" y="10.65" width="1.5" height="1.5" fill="#c0c0c0"/><rect x="16.25" y="9.75" width="3.35" height="3.35" fill="#ffffff"/><rect x="17.15" y="10.65" width="1.5" height="1.5" fill="#c0c0c0"/><rect x="19.50" y="9.75" width="3.35" height="3.35" fill="#ff0000"/><rect x="22.75" y="9.75" width="3.35" height="3.35" fill="#ffff00"/><rect x="0.00" y="13.00" width="3.35" height="3.35" fill="#00ffff"/><rect x="3.25" y="13.00" width="3.35" height="3.35" fill="#0000ff"/><rect x="6.50" y="13.00" width="3.35" height="3.35" fill="#ff00ff"/><rect x="9.75" y="13.00" width="3.35" height="3.35" fill="#808080"/><rect x="10.65" y="13.90" width="1.5" height="1.5" fill="#c0c0c0"/><rect x="13.00" y="13.00" width="3.35" height="3.35" fill="#ffffff"/><rect x="13.90" y="13.90" width="1.5" height="1.5" fill="#c0c0c0"/><rect x="16.25" y="13.00" width="3.35" height="3.35" fill="#ff0000"/><rect x="19.50" y="13.00" width="3.35" height="3.35" fill="#ffff00"/><rect x="22.75" y="13.00" width="3.35" height="3.35" fill="#00ff00"/><rect x="0.00" y="16.25" width="3.35" height="3.35" fill="#0000ff"/><rect x="3.25" y="16.25" width="3.35" height="3.35" fill="#ff00ff"/><rect x="6.50" y="16.25" width="3.35" height="3.35" fill="#808080"/><rect x="7.40" y="17.15" width="1.5" height="1.5" fill="#c0c0c0"/><rect x="9.75" y="16.25" width="3.35" height="3.35" fill="#ffffff"/><rect x="10.65" y="17.15" width="1.5" height="1.5" fill="#c0c0c0"/><rect x="13.00" y="16.25" width="3.35" height="3.35" fill="#ff0000"/><rect x="16.25" y="16.25" width="3.35" height="3.35" fill="#ffff00"/><rect x="19.50" y="16.25" width="3.35" height="3.35" fill="#00ff00"/><rect x="22.75" y="16.25" width="3.35" height="3.35" fill="#00ffff"/><rect x="0.00" y="19.50" width="3.35" height="3.35" fill="#ff00ff"/><rect x="3.25" y="19.50" width="3.35" height="3.35" fill="#808080"/><rect x="4.15" y="20.40" width="1.5" height="1.5" fill="#c0c0c0"/><rect x="6.50" y="19.50" width="3.35" height="3.35" fill="#ffffff"/><rect x="7.40" y="20.40" width="1.5" height="1.5" fill="#c0c0c0"/><rect x="9.75" y="19.50" width="3.35" height="3.35" fill="#ff0000"/><rect x="13.00" y="19.50" width="3.35" height="3.35" fill="#ffff00"/><rect x="16.25" y="19.50" width="3.35" height="3.35" fill="#00ff00"/><rect x="19.50" y="19.50" width="3.35" height="3.35" fill="#00ffff"/><rect x="22.75" y="19.50" width="3.35" height="3.35" fill="#0000ff"/><rect x="0.00" y="22.75" width="3.35" height="3.35" fill="#808080"/><rect x="0.90" y="23.65" width="1.5" height="1.5" fill="#c0c0c0"/><rect x="3.25" y="22.75" width="3.35" height="3.35" fill="#ffffff"/><rect x="4.15" y="23.65" width="1.5" height="1.5" fill="#c0c0c0"/><rect x="6.50" y="22.75" width="3.35" height="3.35" fill="#ff0000"/><rect x="9.75" y="22.75" width="3.35" height="3.35" fill="#ffff00"/><rect x="13.00" y="22.75" width="3.35" height="3.35" fill="#00ff00"/><rect x="16.25" y="22.75" width="3.35" height="3.35" fill="#00ffff"/><rect x="19.50" y="22.75" width="3.35" height="3.35" fill="#0000ff"/><rect x="22.75" y="22.75" width="3.35" height="3.35" fill="#ff00ff"/></svg>
<svg class="a" style="left:661px;top:519px;" width="16" height="16" viewBox="0 0 16 16"><circle cx="8" cy="8" r="7.8" fill="#c4c4c4"/><text x="8" y="12" font-size="11" font-weight="bold" text-anchor="middle" fill="#4a4a4a" font-family="Liberation Sans">S</text></svg>
<svg class="a" style="left:684px;top:519px;" width="16" height="16" viewBox="0 0 16 16"><rect x="0.5" y="0.5" width="15" height="4" rx="2" fill="none" stroke="#a8a8a8"/><rect x="0.5" y="5.8" width="15" height="4" rx="2" fill="none" stroke="#a8a8a8"/><rect x="0.5" y="11.1" width="15" height="4" rx="2" fill="none" stroke="#a8a8a8"/></svg>
<svg class="a" style="left:541.3000000000001px;top:519.0px;" width="18.6" height="18.6" viewBox="0 0 18.6 18.6"><circle cx="9.3" cy="9.3" r="7.3" fill="#ffffff" stroke="#000" stroke-width="1.8"/></svg>
<svg class="a" style="left:705.7px;top:519.0px;" width="18.6" height="18.6" viewBox="0 0 18.6 18.6"><circle cx="9.3" cy="9.3" r="7.3" fill="#7b9a6b" stroke="#000" stroke-width="1.8"/></svg>
<div class="t" style="right:1225px;top:549px;font-size:12.6px;color:#ececec;">Out Alpha</div>
<svg class="a" style="left:707.7px;top:546.0px;" width="14.6" height="14.6" viewBox="0 0 14.6 14.6"><circle cx="7.3" cy="7.3" r="5.3" fill="#7b9a6b" stroke="#000" stroke-width="1.7"/></svg>
<div class="t" style="right:1225px;top:570px;font-size:12.6px;color:#ececec;">Out Color</div>
<svg class="a" style="left:697px;top:570px;" width="10" height="10" viewBox="0 0 10 10"><rect x="0.5" y="0.5" width="9" height="9" fill="none" stroke="#8f8f8f"/><path d="M5 2v6M2 5h6" stroke="#8f8f8f"/></svg>
<svg class="a" style="left:707.7px;top:567.1px;" width="14.6" height="14.6" viewBox="0 0 14.6 14.6"><circle cx="7.3" cy="7.3" r="5.3" fill="#7b9a6b" stroke="#000" stroke-width="1.7"/></svg>
<svg class="a" style="left:558px;top:591px;" width="10" height="10" viewBox="0 0 10 10"><rect x="0.5" y="0.5" width="9" height="9" fill="none" stroke="#8f8f8f"/><path d="M5 2v6M2 5h6" stroke="#8f8f8f"/></svg>
<div class="t" style="left:571px;top:591px;font-size:12.6px;color:#ececec;">Uv Coord</div>
<svg class="a" style="left:543.3000000000001px;top:588.4000000000001px;" width="14.6" height="14.6" viewBox="0 0 14.6 14.6"><circle cx="7.3" cy="7.3" r="5.3" fill="#7b9a6b" stroke="#000" stroke-width="1.7"/></svg>
<div class="t" style="left:555px;top:656px;font-size:14px;color:#e8e8e8;">n.png</div>
<div class="a" style="left:550px;top:676px;width:166px;height:103px;background:#000;border-radius:7px"></div>
<div class="a" style="left:552px;top:678px;width:162px;height:99px;background:#4d4d4d;border-radius:5px;overflow:hidden"><div class="a" style="left:0;top:51.5px;width:162px;height:21.5px;background:#616161"></div><div class="a" style="left:0;top:73px;width:162px;height:30px;background:#555555"></div></div>
<svg class="a" style="left:565px;top:679px;" width="26" height="26" viewBox="0 0 26 26"><defs><linearGradient id="ng" x1="0" y1="0" x2="1" y2="1"><stop offset="0" stop-color="#7a78f0"/><stop offset="0.5" stop-color="#8c88ff"/><stop offset="1" stop-color="#7470e8"/></linearGradient></defs><rect width="26" height="26" fill="url(#ng)"/><path d="M2 8q6-3 10 2t12-2M0 18q7-4 12 1t14-3" stroke="#9a96ff" stroke-width="1.2" fill="none" opacity="0.7"/></svg>
<svg class="a" style="left:661px;top:683px;" width="16" height="16" viewBox="0 0 16 16"><circle cx="8" cy="8" r="7.8" fill="#c4c4c4"/><text x="8" y="12" font-size="11" font-weight="bold" text-anchor="middle" fill="#4a4a4a" font-family="Liberation Sans">S</text></svg>
<svg class="a" style="left:684px;top:683px;" width="16" height="16" viewBox="0 0 16 16"><rect x="0.5" y="0.5" width="15" height="4" rx="2" fill="none" stroke="#a8a8a8"/><rect x="0.5" y="5.8" width="15" height="4" rx="2" fill="none" stroke="#a8a8a8"/><rect x="0.5" y="11.1" width="15" height="4" rx="2" fill="none" stroke="#a8a8a8"/></svg>
<svg class="a" style="left:541.3000000000001px;top:683.0px;" width="18.6" height="18.6" viewBox="0 0 18.6 18.6"><circle cx="9.3" cy="9.3" r="7.3" fill="#ffffff" stroke="#000" stroke-width="1.8"/></svg>
<svg class="a" style="left:705.7px;top:683.0px;" width="18.6" height="18.6" viewBox="0 0 18.6 18.6"><circle cx="9.3" cy="9.3" r="7.3" fill="#7b9a6b" stroke="#000" stroke-width="1.8"/></svg>
<div class="t" style="right:1225px;top:713px;font-size:12.6px;color:#ececec;">Out Alpha</div>
<svg class="a" style="left:707.7px;top:710.0px;" width="14.6" height="14.6" viewBox="0 0 14.6 14.6"><circle cx="7.3" cy="7.3" r="5.3" fill="#7b9a6b" stroke="#000" stroke-width="1.7"/></svg>
<div class="t" style="right:1225px;top:734px;font-size:12.6px;color:#ececec;">Out Color</div>
<svg class="a" style="left:697px;top:734px;" width="10" height="10" viewBox="0 0 10 10"><rect x="0.5" y="0.5" width="9" height="9" fill="none" stroke="#8f8f8f"/><path d="M5 2v6M2 5h6" stroke="#8f8f8f"/></svg>
<svg class="a" style="left:707.7px;top:731.1px;" width="14.6" height="14.6" viewBox="0 0 14.6 14.6"><circle cx="7.3" cy="7.3" r="5.3" fill="#7b9a6b" stroke="#000" stroke-width="1.7"/></svg>
<svg class="a" style="left:558px;top:755px;" width="10" height="10" viewBox="0 0 10 10"><rect x="0.5" y="0.5" width="9" height="9" fill="none" stroke="#8f8f8f"/><path d="M5 2v6M2 5h6" stroke="#8f8f8f"/></svg>
<div class="t" style="left:571px;top:755px;font-size:12.6px;color:#ececec;">Uv Coord</div>
<svg class="a" style="left:543.3000000000001px;top:752.4000000000001px;" width="14.6" height="14.6" viewBox="0 0 14.6 14.6"><circle cx="7.3" cy="7.3" r="5.3" fill="#7b9a6b" stroke="#000" stroke-width="1.7"/></svg>
<div class="t" style="left:842px;top:478px;font-size:14px;color:#50e8a0;">MyMaterial</div>
<div class="a" style="left:834px;top:495px;width:187px;height:342px;background:#ff0000;border-radius:8px"></div>
<div class="a" style="left:836.5px;top:497.5px;width:182px;height:337px;background:#40f0a8;border-radius:7px"></div>
<div class="a" style="left:839.5px;top:500.5px;width:176px;height:331px;background:#4d3a77;border-radius:5px;overflow:hidden"><div class="a" style="left:0;top:50.5px;width:176px;height:21px;background:#5d4a84"></div><div class="a" style="left:0;top:92.5px;width:176px;height:21px;background:#5d4a84"></div><div class="a" style="left:0;top:134.5px;width:176px;height:21px;background:#5d4a84"></div><div class="a" style="left:0;top:176.5px;width:176px;height:21px;background:#5d4a84"></div><div class="a" style="left:0;top:218.5px;width:176px;height:21px;background:#5d4a84"></div><div class="a" style="left:0;top:260.5px;width:176px;height:21px;background:#5d4a84"></div><div class="a" style="left:0;top:302.5px;width:176px;height:21px;background:#5d4a84"></div></div>
<div class="a" style="left:852px;top:502px;width:26px;height:26px;background:#bfbfbf;"></div>
<svg class="a" style="left:963px;top:505px;" width="16" height="16" viewBox="0 0 16 16"><circle cx="8" cy="8" r="7.8" fill="#c4c4c4"/><text x="8" y="12" font-size="11" font-weight="bold" text-anchor="middle" fill="#4d3a77" font-family="Liberation Sans">S</text></svg>
<svg class="a" style="left:985px;top:505px;" width="16" height="16" viewBox="0 0 16 16"><rect x="0.5" y="0.5" width="15" height="4" rx="2" fill="none" stroke="#a8a8a8"/><rect x="0.5" y="5.8" width="15" height="4" rx="2" fill="none" stroke="#a8a8a8"/><rect x="0.5" y="11.1" width="15" height="4" rx="2" fill="none" stroke="#a8a8a8"/></svg>
<svg class="a" style="left:828.2px;top:505.7px;" width="18.6" height="18.6" viewBox="0 0 18.6 18.6"><circle cx="9.3" cy="9.3" r="7.3" fill="#ffa500" stroke="#000" stroke-width="1.8"/></svg>
<svg class="a" style="left:1007.2px;top:505.7px;" width="18.6" height="18.6" viewBox="0 0 18.6 18.6"><circle cx="9.3" cy="9.3" r="7.3" fill="#e80000" stroke="#000" stroke-width="1.8"/></svg>
<div class="t" style="right:923px;top:535px;font-size:12.6px;color:#ececec;">Out Color</div>
<svg class="a" style="left:999px;top:535px;" width="10" height="10" viewBox="0 0 10 10"><rect x="0.5" y="0.5" width="9" height="9" fill="none" stroke="#8f8f8f"/><path d="M5 2v6M2 5h6" stroke="#8f8f8f"/></svg>
<svg class="a" style="left:1009.2px;top:533.2px;" width="14.6" height="14.6" viewBox="0 0 14.6 14.6"><circle cx="7.3" cy="7.3" r="5.3" fill="#e80000" stroke="#000" stroke-width="1.7"/></svg>
<svg class="a" style="left:845px;top:556.5px;" width="10" height="10" viewBox="0 0 10 10"><rect x="0.5" y="0.5" width="9" height="9" fill="none" stroke="#8f8f8f"/><path d="M5 2v6M2 5h6" stroke="#8f8f8f"/></svg>
<div class="t" style="left:857.5px;top:557.0px;font-size:12.6px;color:#ececec;">Base Color</div>
<svg class="a" style="left:830.3000000000001px;top:554.2px;" width="14.6" height="14.6" viewBox="0 0 14.6 14.6"><circle cx="7.3" cy="7.3" r="5.3" fill="#e80000" stroke="#000" stroke-width="1.7"/></svg>
<div class="t" style="left:857.5px;top:578.0px;font-size:12.6px;color:#ececec;">Metallic</div>
<svg class="a" style="left:830.3000000000001px;top:575.2px;" width="14.6" height="14.6" viewBox="0 0 14.6 14.6"><circle cx="7.3" cy="7.3" r="5.3" fill="#7b9a6b" stroke="#000" stroke-width="1.7"/></svg>
<div class="t" style="left:857.5px;top:599.0px;font-size:12.6px;color:#ececec;">Roughness</div>
<svg class="a" style="left:830.3000000000001px;top:596.2px;" width="14.6" height="14.6" viewBox="0 0 14.6 14.6"><circle cx="7.3" cy="7.3" r="5.3" fill="#7b9a6b" stroke="#000" stroke-width="1.7"/></svg>
<svg class="a" style="left:845px;top:619.5px;" width="10" height="10" viewBox="0 0 10 10"><rect x="0.5" y="0.5" width="9" height="9" fill="none" stroke="#8f8f8f"/><path d="M5 2v6M2 5h6" stroke="#8f8f8f"/></svg>
<div class="t" style="left:857.5px;top:620.0px;font-size:12.6px;color:#ececec;">Emissive</div>
<svg class="a" style="left:830.3000000000001px;top:617.2px;" width="14.6" height="14.6" viewBox="0 0 14.6 14.6"><circle cx="7.3" cy="7.3" r="5.3" fill="#e80000" stroke="#000" stroke-width="1.7"/></svg>
<svg class="a" style="left:845px;top:640.5px;" width="10" height="10" viewBox="0 0 10 10"><rect x="0.5" y="0.5" width="9" height="9" fill="none" stroke="#8f8f8f"/><path d="M5 2v6M2 5h6" stroke="#8f8f8f"/></svg>
<div class="t" style="left:857.5px;top:641.0px;font-size:12.6px;color:#ececec;">TEX Color Map</div>
<svg class="a" style="left:830.3000000000001px;top:638.2px;" width="14.6" height="14.6" viewBox="0 0 14.6 14.6"><circle cx="7.3" cy="7.3" r="5.3" fill="#e80000" stroke="#000" stroke-width="1.7"/></svg>
<svg class="a" style="left:845px;top:661.5px;" width="10" height="10" viewBox="0 0 10 10"><rect x="0.5" y="0.5" width="9" height="9" fill="none" stroke="#8f8f8f"/><path d="M5 2v6M2 5h6" stroke="#8f8f8f"/></svg>
<div class="t" style="left:857.5px;top:662.0px;font-size:12.6px;color:#ececec;">TEX Normal Map</div>
<svg class="a" style="left:830.3000000000001px;top:659.2px;" width="14.6" height="14.6" viewBox="0 0 14.6 14.6"><circle cx="7.3" cy="7.3" r="5.3" fill="#e80000" stroke="#000" stroke-width="1.7"/></svg>
<svg class="a" style="left:845px;top:682.5px;" width="10" height="10" viewBox="0 0 10 10"><rect x="0.5" y="0.5" width="9" height="9" fill="none" stroke="#8f8f8f"/><path d="M5 2v6M2 5h6" stroke="#8f8f8f"/></svg>
<div class="t" style="left:857.5px;top:683.0px;font-size:12.6px;color:#ececec;">TEX Metallic Map</div>
<svg class="a" style="left:830.3000000000001px;top:680.2px;" width="14.6" height="14.6" viewBox="0 0 14.6 14.6"><circle cx="7.3" cy="7.3" r="5.3" fill="#e80000" stroke="#000" stroke-width="1.7"/></svg>
<svg class="a" style="left:845px;top:703.5px;" width="10" height="10" viewBox="0 0 10 10"><rect x="0.5" y="0.5" width="9" height="9" fill="none" stroke="#8f8f8f"/><path d="M5 2v6M2 5h6" stroke="#8f8f8f"/></svg>
<div class="t" style="left:857.5px;top:704.0px;font-size:12.6px;color:#ececec;">TEX Roughness Map</div>
<svg class="a" style="left:830.3000000000001px;top:701.2px;" width="14.6" height="14.6" viewBox="0 0 14.6 14.6"><circle cx="7.3" cy="7.3" r="5.3" fill="#e80000" stroke="#000" stroke-width="1.7"/></svg>
<svg class="a" style="left:845px;top:724.5px;" width="10" height="10" viewBox="0 0 10 10"><rect x="0.5" y="0.5" width="9" height="9" fill="none" stroke="#8f8f8f"/><path d="M5 2v6M2 5h6" stroke="#8f8f8f"/></svg>
<div class="t" style="left:857.5px;top:725.0px;font-size:12.6px;color:#ececec;">TEX Emissive Map</div>
<svg class="a" style="left:830.3000000000001px;top:722.2px;" width="14.6" height="14.6" viewBox="0 0 14.6 14.6"><circle cx="7.3" cy="7.3" r="5.3" fill="#e80000" stroke="#000" stroke-width="1.7"/></svg>
<svg class="a" style="left:845px;top:745.5px;" width="10" height="10" viewBox="0 0 10 10"><rect x="0.5" y="0.5" width="9" height="9" fill="none" stroke="#8f8f8f"/><path d="M5 2v6M2 5h6" stroke="#8f8f8f"/></svg>
<div class="t" style="left:857.5px;top:746.0px;font-size:12.6px;color:#ececec;">TEX Ao Map</div>
<svg class="a" style="left:830.3000000000001px;top:743.2px;" width="14.6" height="14.6" viewBox="0 0 14.6 14.6"><circle cx="7.3" cy="7.3" r="5.3" fill="#e80000" stroke="#000" stroke-width="1.7"/></svg>
<svg class="a" style="left:845px;top:766.5px;" width="10" height="10" viewBox="0 0 10 10"><rect x="0.5" y="0.5" width="9" height="9" fill="none" stroke="#8f8f8f"/><path d="M5 2v6M2 5h6" stroke="#8f8f8f"/></svg>
<div class="t" style="left:857.5px;top:767.0px;font-size:12.6px;color:#ececec;">TEX Global Diffuse Cube</div>
<svg class="a" style="left:830.3000000000001px;top:764.2px;" width="14.6" height="14.6" viewBox="0 0 14.6 14.6"><circle cx="7.3" cy="7.3" r="5.3" fill="#e80000" stroke="#000" stroke-width="1.7"/></svg>
<svg class="a" style="left:845px;top:787.5px;" width="10" height="10" viewBox="0 0 10 10"><rect x="0.5" y="0.5" width="9" height="9" fill="none" stroke="#8f8f8f"/><path d="M5 2v6M2 5h6" stroke="#8f8f8f"/></svg>
<div class="t" style="left:857.5px;top:788.0px;font-size:12.6px;color:#ececec;">TEX Global Specular Cube</div>
<svg class="a" style="left:830.3000000000001px;top:785.2px;" width="14.6" height="14.6" viewBox="0 0 14.6 14.6"><circle cx="7.3" cy="7.3" r="5.3" fill="#e80000" stroke="#000" stroke-width="1.7"/></svg>
<svg class="a" style="left:845px;top:808.5px;" width="10" height="10" viewBox="0 0 10 10"><rect x="0.5" y="0.5" width="9" height="9" fill="none" stroke="#8f8f8f"/><path d="M5 2v6M2 5h6" stroke="#8f8f8f"/></svg>
<div class="t" style="left:857.5px;top:809.0px;font-size:12.6px;color:#ececec;">TEX Brdf Lut</div>
<svg class="a" style="left:830.3000000000001px;top:806.2px;" width="14.6" height="14.6" viewBox="0 0 14.6 14.6"><circle cx="7.3" cy="7.3" r="5.3" fill="#e80000" stroke="#000" stroke-width="1.7"/></svg>
<div class="t" style="left:1143px;top:479px;font-size:14px;color:#e8e8e8;">StingrayPBS1SG</div>
<div class="a" style="left:1138px;top:499px;width:166px;height:103px;background:#000;border-radius:7px"></div>
<div class="a" style="left:1140px;top:501px;width:162px;height:99px;background:#2e3f74;border-radius:5px;overflow:hidden"><div class="a" style="left:0;top:50px;width:162px;height:21px;background:#3d4e84"></div></div>
<svg class="a" style="left:1155px;top:504px;" width="23" height="23" viewBox="0 0 23 23"><defs><radialGradient id="sg" cx="0.4" cy="0.35" r="0.7"><stop offset="0" stop-color="#e0e0e0"/><stop offset="1" stop-color="#8a8a8a"/></radialGradient><radialGradient id="sg2" cx="0.35" cy="0.35" r="0.7"><stop offset="0" stop-color="#bbb"/><stop offset="1" stop-color="#333"/></radialGradient></defs><circle cx="11.5" cy="11.5" r="10.8" fill="url(#sg)" stroke="#444" stroke-width="0.8"/><path d="M10 5h7v10h-7z" fill="#bbb" stroke="#333" stroke-width="0.8"/><circle cx="8" cy="15" r="4.5" fill="url(#sg2)" stroke="#333" stroke-width="0.6"/></svg>
<svg class="a" style="left:1272px;top:506px;" width="16" height="16" viewBox="0 0 16 16"><rect x="0.5" y="0.5" width="15" height="4" rx="2" fill="none" stroke="#a8a8a8"/><rect x="0.5" y="5.8" width="15" height="4" rx="2" fill="none" stroke="#a8a8a8"/><rect x="0.5" y="11.1" width="15" height="4" rx="2" fill="none" stroke="#a8a8a8"/></svg>
<svg class="a" style="left:1129.7px;top:505.7px;" width="18.6" height="18.6" viewBox="0 0 18.6 18.6"><circle cx="9.3" cy="9.3" r="7.3" fill="#e80000" stroke="#000" stroke-width="1.8"/></svg>
<svg class="a" style="left:1293.7px;top:505.7px;" width="18.6" height="18.6" viewBox="0 0 18.6 18.6"><circle cx="9.3" cy="9.3" r="7.3" fill="#ffffff" stroke="#000" stroke-width="1.8"/></svg>
<div class="t" style="left:1159px;top:535px;font-size:12.6px;color:#ececec;">Surface Shader</div>
<svg class="a" style="left:1131.7px;top:533.2px;" width="14.6" height="14.6" viewBox="0 0 14.6 14.6"><circle cx="7.3" cy="7.3" r="5.3" fill="#e80000" stroke="#000" stroke-width="1.7"/></svg>
<div class="t" style="left:1159px;top:556px;font-size:12.6px;color:#ececec;">Volume Shader</div>
<svg class="a" style="left:1131px;top:553.5px;" width="16" height="16" viewBox="0 0 16 16"><circle cx="8" cy="8" r="6" fill="#000000" stroke="#000" stroke-width="1"/></svg>
<div class="t" style="left:1159px;top:577px;font-size:12.6px;color:#ececec;">Displacement Shader</div>
<svg class="a" style="left:1131px;top:574.5px;" width="16" height="16" viewBox="0 0 16 16"><circle cx="8" cy="8" r="6" fill="#000000" stroke="#000" stroke-width="1"/></svg>
<svg class="a" style="left:0px;top:0px;pointer-events:none" width="1920" height="1040" viewBox="0 0 1920 1040"><path d="M955 649L1520 875.5" stroke="#ee1c24" stroke-width="8.5" stroke-linecap="round"/><ellipse cx="1714" cy="878" rx="171.7" ry="19.1" stroke="#ee1c24" stroke-width="7.7" fill="none"/></svg>
</body></html>
